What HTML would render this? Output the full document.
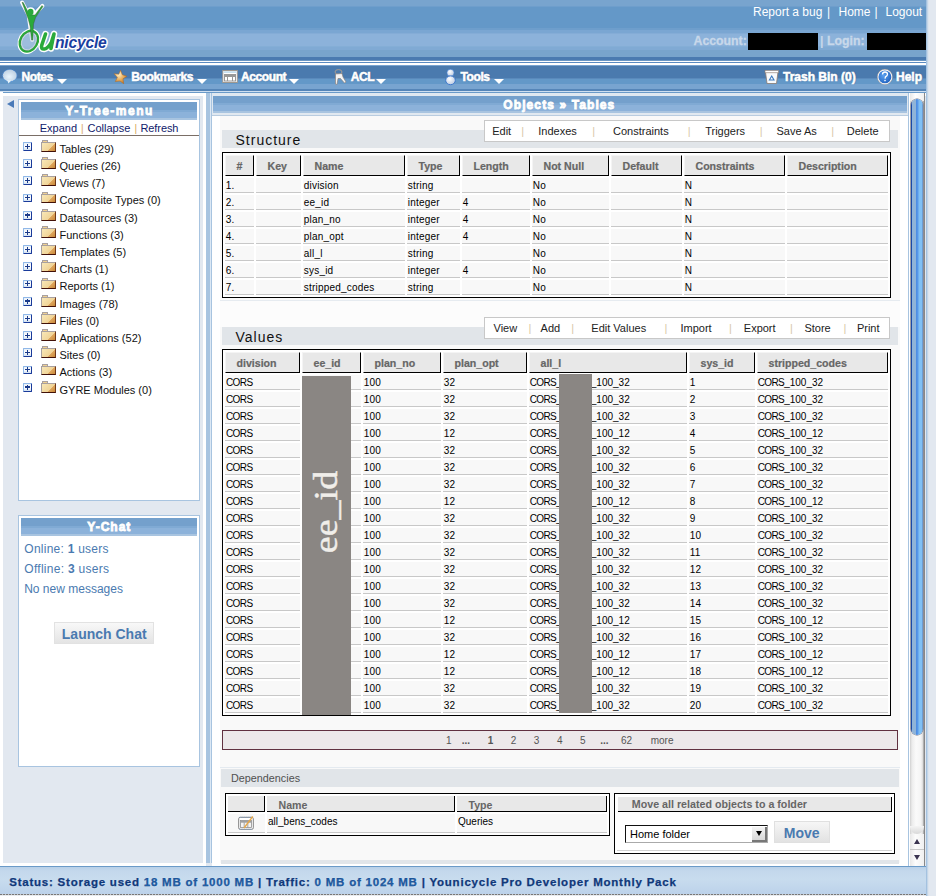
<!DOCTYPE html><html><head><meta charset="utf-8"><style>
*{margin:0;padding:0;box-sizing:border-box}
html,body{width:936px;height:896px;overflow:hidden;background:#e2e8f0;font-family:"Liberation Sans",sans-serif}
.t{position:absolute;white-space:nowrap}
.r{position:absolute}
</style></head><body><div class="r" style="left:0px;top:0px;width:926px;height:65px;background:linear-gradient(#78a4ce 0,#78a4ce 6px,#6e9ecc 6px,#6e9ecc 7.5px,#6498c8 7.5px,#6498c8 27.8px,#6e9ecc 27.8px,#6e9ecc 30px,#7aa6d2 30px,#7aa6d2 33.2px,#84acd6 33.2px,#84acd6 34px,#8cb2da 34px,#8cb2da 46px,#84aed6 46px,#84aed6 47px,#80aad4 47px,#80aad4 50px,#78a4cc 50px,#78a4cc 57.5px,#4a7ab0 57.5px,#4a7ab0 60px,#6a96c4 60px,#6a96c4 61px,#fff 61px,#fff 62px,#5a8ac0 62px,#5a8ac0 63px,#fff 63px,#fff 65px)"></div>
<div class="r" style="left:0px;top:65px;width:926px;height:31px;background:linear-gradient(#7aa4d0 0,#7aa4d0 1px,#4a7aae 1px,#4a7aae 13px,#5a8abc 13px,#5a8abc 14px,#6398c8 14px,#6398c8 19px,#78a4d0 19px,#78a4d0 24px,#5585b8 24px,#5585b8 26px,#d0e0f0 26px,#d0e0f0 27px,#6a9ac8 27px,#6a9ac8 28px,#fff 28px)"></div>
<div class="r" style="left:926px;top:0px;width:10px;height:896px;background:linear-gradient(90deg,#94b8dc 0,#b4cce4 1px,#d4e0ec 2px,#e2e8f0 3px)"></div>
<svg class="r" style="left:0;top:0" width="120" height="60" viewBox="0 0 120 60">
<g fill="none" stroke="#fff" stroke-linecap="round" stroke-linejoin="round">
<ellipse cx="28.9" cy="41.2" rx="11" ry="8.6" stroke-width="4.4" transform="rotate(-60 28.9 41.2)"/>
<path d="M22.1 2.5 L28.6 15 L30.5 28 L32.1 40" stroke-width="4"/>
<path d="M42.4 5.9 L33.4 15.6" stroke-width="4"/>
<circle cx="30.6" cy="11.9" r="3.2" stroke-width="3" fill="#fff"/>
</g>
<ellipse cx="28.9" cy="41.2" rx="9.6" ry="7.4" fill="#b0c8e0" opacity="0.5" transform="rotate(-60 28.9 41.2)"/>
<ellipse cx="28.9" cy="41.2" rx="11" ry="8.6" fill="none" stroke="#2aaa3a" stroke-width="2.2" transform="rotate(-60 28.9 41.2)"/>
<ellipse cx="28.9" cy="41.2" rx="9.9" ry="7.5" fill="none" stroke="#2a4a3a" stroke-width="0.5" opacity="0.6" transform="rotate(-60 28.9 41.2)"/>
<path d="M22 2.3 L23.3 2.6 L29.5 14.8 L35 15 L42 5.5 L43 6.5 L35.6 17.5 L33.5 24 L32.8 40 L31.6 40 L30 26 L28.2 19 Z" fill="#2aaa3a" stroke="#3a4a3a" stroke-width="0.4"/>
<ellipse cx="30.6" cy="11.9" rx="2.9" ry="3.2" fill="#2aaa3a"/>
<path d="M45.5 34 L41.8 45 Q40.5 49.5 44.5 49 Q48 48.5 51.5 42 L54 34 M54 34 L51 48.5" fill="none" stroke="#fff" stroke-width="6.5" stroke-linecap="round" stroke-linejoin="round"/>
<path d="M45.5 34 L41.8 45 Q40.5 49.5 44.5 49 Q48 48.5 51.5 42 L54 34 M54 34 L51 48.5" fill="none" stroke="#2aaa3a" stroke-width="3.6" stroke-linecap="round" stroke-linejoin="round"/>
<g font-family="Liberation Sans" font-weight="700" font-style="italic" stroke="#fff" stroke-width="3" stroke-linejoin="round" paint-order="stroke">

<text x="55" y="47.9" font-size="15.6" fill="#1a40a0" letter-spacing="-0.2">nicycle</text>
</g>
</svg>
<svg class="r" style="left:0;top:64px" width="936" height="28" viewBox="0 64 936 28">
<defs>
<radialGradient id="gb" cx="0.45" cy="0.6" r="0.7"><stop offset="0" stop-color="#e8f4fc"/><stop offset="1" stop-color="#b4c8dc"/></radialGradient>
<radialGradient id="gs" cx="0.35" cy="0.3" r="0.8"><stop offset="0" stop-color="#fff4d0"/><stop offset="0.5" stop-color="#e8b060"/><stop offset="1" stop-color="#c07020"/></radialGradient>
<radialGradient id="gh" cx="0.4" cy="0.4" r="0.7"><stop offset="0" stop-color="#5aa0f0"/><stop offset="1" stop-color="#1a5ab8"/></radialGradient>
<radialGradient id="gw" cx="0.4" cy="0.35" r="0.7"><stop offset="0" stop-color="#ffffff"/><stop offset="1" stop-color="#b8c8e0"/></radialGradient>
</defs>
<ellipse cx="9.8" cy="75.5" rx="7.1" ry="6.1" fill="url(#gb)" stroke="#4a90e8" stroke-width="0.7" stroke-dasharray="1 1"/>
<path d="M7 80 L8.5 83.5 L11 80.5 Z" fill="#e8f4fc"/>
<path d="M120.5 70.2 L122.3 74.8 L126.9 76.3 L123 78.8 L123.7 83.7 L120 81 L115.3 81.5 L117.4 77.4 L114.2 73.7 L118.8 74.3 Z" fill="url(#gs)" stroke="#b86818" stroke-width="0.5"/>
<rect x="222.8" y="70.5" width="14.5" height="12" fill="#fff" stroke="#a09890" stroke-width="1"/>
<rect x="223.5" y="71.2" width="13" height="1.8" fill="#c8e0f0"/>
<rect x="224.5" y="74.5" width="11" height="6.5" fill="none" stroke="#989898" stroke-width="1"/>
<rect x="224.5" y="74.5" width="11" height="2.5" fill="#989898"/>
<line x1="227.5" y1="77" x2="227.5" y2="81" stroke="#989898"/><line x1="232.5" y1="77" x2="232.5" y2="81" stroke="#989898"/>
<ellipse cx="338.5" cy="72" rx="3.5" ry="2.4" fill="none" stroke="#b0a090" stroke-width="0.9"/>
<path d="M335.5 74 L342 73.5 L343 77 L346 82 L344.5 83 L340.5 78.5 L338 78.5 L337 84.5 L335.5 84 L335.5 78 Z" fill="#f4f4f4" stroke="#8a7a70" stroke-width="0.6"/>
<circle cx="450.5" cy="72.8" r="3.6" fill="url(#gw)" stroke="#3a7ad0" stroke-width="0.6"/>
<ellipse cx="450.5" cy="80.3" rx="4.8" ry="4.4" fill="url(#gw)" stroke="#2a6ac8" stroke-width="0.8"/>
<path d="M765.5 72 L778 72 L776.5 83.5 L767 83.5 Z" fill="#f8fafc" stroke="#8a7a70" stroke-width="0.8"/>
<rect x="765" y="70.3" width="13.5" height="2.5" fill="#fff" stroke="#8a7a70" stroke-width="0.6"/>
<path d="M771.7 76 L774 80 L769.4 80 Z" fill="none" stroke="#3a7ac0" stroke-width="1.1"/>
<circle cx="884.9" cy="76.9" r="7" fill="url(#gh)" stroke="#fff" stroke-width="1.1"/>
<circle cx="884.9" cy="76.9" r="7.6" fill="none" stroke="#a08878" stroke-width="0.4"/>
<path d="M882.5 74.5 Q882.5 72 885 72 Q887.5 72 887.5 74.3 Q887.5 75.8 885.5 76.8 L885 78.6" fill="none" stroke="#fff" stroke-width="1.3"/>
<circle cx="885" cy="80.6" r="0.8" fill="#fff"/>
</svg>
<div class="t" style="left:753px;top:5.84px;font-size:12px;line-height:12px;font-weight:400;color:#fff;">Report a bug</div>
<div class="t" style="left:827px;top:5.84px;font-size:12px;line-height:12px;font-weight:400;color:#fff;">|</div>
<div class="t" style="left:838.5px;top:5.84px;font-size:12px;line-height:12px;font-weight:400;color:#fff;">Home</div>
<div class="t" style="left:874.5px;top:5.84px;font-size:12px;line-height:12px;font-weight:400;color:#fff;">|</div>
<div class="t" style="left:885.5px;top:5.84px;font-size:12px;line-height:12px;font-weight:400;color:#fff;">Logout</div>
<div class="t" style="left:693.5px;top:34.99px;font-size:12.3px;line-height:12.3px;font-weight:700;color:#c8d8ea;-webkit-text-stroke:0.3px #c8d8ea">Account:</div>
<div class="r" style="left:748px;top:33px;width:70px;height:17px;background:#000"></div>
<div class="t" style="left:820px;top:34.99px;font-size:12.3px;line-height:12.3px;font-weight:700;color:#c8d8ea;">|</div>
<div class="t" style="left:827px;top:34.99px;font-size:12.3px;line-height:12.3px;font-weight:700;color:#c8d8ea;-webkit-text-stroke:0.3px #c8d8ea">Login:</div>
<div class="r" style="left:867px;top:33px;width:59px;height:17px;background:#000"></div>
<div class="t" style="left:21.5px;top:71.14px;font-size:12px;line-height:12px;font-weight:700;color:#fff;letter-spacing:-0.4px;-webkit-text-stroke:0.55px #fff;text-shadow:0 0 1.5px #2a5080">Notes</div>
<div class="r" style="left:57px;top:78.5px;width:0;height:0;border-left:5px solid transparent;border-right:5px solid transparent;border-top:5.5px solid #fff"></div>
<div class="t" style="left:131.3px;top:71.14px;font-size:12px;line-height:12px;font-weight:700;color:#fff;letter-spacing:-0.4px;-webkit-text-stroke:0.55px #fff;text-shadow:0 0 1.5px #2a5080">Bookmarks</div>
<div class="r" style="left:197px;top:78.5px;width:0;height:0;border-left:5px solid transparent;border-right:5px solid transparent;border-top:5.5px solid #fff"></div>
<div class="t" style="left:241.0px;top:71.14px;font-size:12px;line-height:12px;font-weight:700;color:#fff;letter-spacing:-0.4px;-webkit-text-stroke:0.55px #fff;text-shadow:0 0 1.5px #2a5080">Account</div>
<div class="r" style="left:289px;top:78.5px;width:0;height:0;border-left:5px solid transparent;border-right:5px solid transparent;border-top:5.5px solid #fff"></div>
<div class="t" style="left:350.7px;top:71.14px;font-size:12px;line-height:12px;font-weight:700;color:#fff;letter-spacing:-0.4px;-webkit-text-stroke:0.55px #fff;text-shadow:0 0 1.5px #2a5080">ACL</div>
<div class="r" style="left:375.7px;top:78.5px;width:0;height:0;border-left:5px solid transparent;border-right:5px solid transparent;border-top:5.5px solid #fff"></div>
<div class="t" style="left:460.5px;top:71.14px;font-size:12px;line-height:12px;font-weight:700;color:#fff;letter-spacing:-0.4px;-webkit-text-stroke:0.55px #fff;text-shadow:0 0 1.5px #2a5080">Tools</div>
<div class="r" style="left:494px;top:78.5px;width:0;height:0;border-left:5px solid transparent;border-right:5px solid transparent;border-top:5.5px solid #fff"></div>
<div class="t" style="left:783px;top:71.14px;font-size:12px;line-height:12px;font-weight:700;color:#fff;-webkit-text-stroke:0.55px #fff;text-shadow:0 0 1.5px #2a5080">Trash Bin (0)</div>
<div class="t" style="left:896px;top:71.14px;font-size:12px;line-height:12px;font-weight:700;color:#fff;-webkit-text-stroke:0.55px #fff;text-shadow:0 0 1.5px #2a5080">Help</div>
<div class="r" style="left:0px;top:92px;width:3px;height:774px;background:#fff"></div>
<div class="r" style="left:3px;top:96px;width:200px;height:767px;background:#e2e8f0"></div>
<div class="r" style="left:3px;top:863px;width:200px;height:3px;background:#fff"></div>
<div class="r" style="left:7px;top:100px;width:0;height:0;border-top:4px solid transparent;border-bottom:4px solid transparent;border-right:7px solid #4a7ab8"></div>
<div class="r" style="left:18px;top:99px;width:182px;height:402px;background:#fff;border:1px solid #a8c4e0"></div>
<div class="r" style="left:21px;top:102px;width:176px;height:18px;background:linear-gradient(#74a0cc 0,#74a0cc 8px,#80aad4 8px,#80aad4 10px,#8cb2da 10px,#8cb2da 16px,#a8c4e0 16px)"></div>
<div class="t" style="left:65.3px;top:104.84px;font-size:12px;line-height:12px;font-weight:700;color:#fff;letter-spacing:1.5px;-webkit-text-stroke:0.85px #fff;text-shadow:0 0 1px #5a80a8">Y-Tree-menu</div>
<div class="t" style="left:39.7px;top:122.69px;font-size:11px;line-height:11px;font-weight:400;color:#10206a;">Expand</div>
<div class="t" style="left:81px;top:123.53px;font-size:10px;line-height:10px;font-weight:400;color:#d8a858;">|</div>
<div class="t" style="left:87.5px;top:122.69px;font-size:11px;line-height:11px;font-weight:400;color:#10206a;">Collapse</div>
<div class="t" style="left:134.5px;top:123.53px;font-size:10px;line-height:10px;font-weight:400;color:#d8a858;">|</div>
<div class="t" style="left:140.5px;top:122.69px;font-size:11px;line-height:11px;font-weight:400;color:#10206a;letter-spacing:-0.1px">Refresh</div>
<div class="r" style="left:19px;top:135px;width:180px;height:1px;background:#7a6e66"></div>
<div class="r" style="left:23.2px;top:142.00px;width:8.8px;height:8.8px;border-top:1px solid #90b8e8;border-left:1px solid #90b8e8;border-right:1.4px solid #1a3a9a;border-bottom:1.4px solid #1a3a9a;border-radius:1px;background:linear-gradient(#e8f0f8,#fff 50%,#d0e0f0)"></div>
<div class="r" style="left:25.2px;top:145.60px;width:5px;height:1.3px;background:#1a3a8a"></div>
<div class="r" style="left:27.05px;top:143.70px;width:1.3px;height:5px;background:#1a3a8a"></div>
<div class="r" style="left:41.5px;top:140.00px;width:6.5px;height:2.4px;background:#f0d090;border:1px solid #a8a0a0;border-bottom:none"></div>
<div class="r" style="left:41.2px;top:142.00px;width:14.5px;height:9.8px;background:linear-gradient(135deg,#f8e8b8 0,#f0d498 62%,#e0a860 64%,#c88838 100%);border-left:1px solid #a8a0a0;border-top:1px solid #a8a0a0;border-right:1px solid #703818;border-bottom:1.5px solid #401008"></div>
<div class="t" style="left:59.5px;top:143.89px;font-size:11px;line-height:11px;font-weight:400;color:#111;">Tables (29)</div>
<div class="r" style="left:23.2px;top:159.20px;width:8.8px;height:8.8px;border-top:1px solid #90b8e8;border-left:1px solid #90b8e8;border-right:1.4px solid #1a3a9a;border-bottom:1.4px solid #1a3a9a;border-radius:1px;background:linear-gradient(#e8f0f8,#fff 50%,#d0e0f0)"></div>
<div class="r" style="left:25.2px;top:162.80px;width:5px;height:1.3px;background:#1a3a8a"></div>
<div class="r" style="left:27.05px;top:160.90px;width:1.3px;height:5px;background:#1a3a8a"></div>
<div class="r" style="left:41.5px;top:157.20px;width:6.5px;height:2.4px;background:#f0d090;border:1px solid #a8a0a0;border-bottom:none"></div>
<div class="r" style="left:41.2px;top:159.20px;width:14.5px;height:9.8px;background:linear-gradient(135deg,#f8e8b8 0,#f0d498 62%,#e0a860 64%,#c88838 100%);border-left:1px solid #a8a0a0;border-top:1px solid #a8a0a0;border-right:1px solid #703818;border-bottom:1.5px solid #401008"></div>
<div class="t" style="left:59.5px;top:161.09px;font-size:11px;line-height:11px;font-weight:400;color:#111;">Queries (26)</div>
<div class="r" style="left:23.2px;top:176.40px;width:8.8px;height:8.8px;border-top:1px solid #90b8e8;border-left:1px solid #90b8e8;border-right:1.4px solid #1a3a9a;border-bottom:1.4px solid #1a3a9a;border-radius:1px;background:linear-gradient(#e8f0f8,#fff 50%,#d0e0f0)"></div>
<div class="r" style="left:25.2px;top:180.00px;width:5px;height:1.3px;background:#1a3a8a"></div>
<div class="r" style="left:27.05px;top:178.10px;width:1.3px;height:5px;background:#1a3a8a"></div>
<div class="r" style="left:41.5px;top:174.40px;width:6.5px;height:2.4px;background:#f0d090;border:1px solid #a8a0a0;border-bottom:none"></div>
<div class="r" style="left:41.2px;top:176.40px;width:14.5px;height:9.8px;background:linear-gradient(135deg,#f8e8b8 0,#f0d498 62%,#e0a860 64%,#c88838 100%);border-left:1px solid #a8a0a0;border-top:1px solid #a8a0a0;border-right:1px solid #703818;border-bottom:1.5px solid #401008"></div>
<div class="t" style="left:59.5px;top:178.29px;font-size:11px;line-height:11px;font-weight:400;color:#111;">Views (7)</div>
<div class="r" style="left:23.2px;top:193.60px;width:8.8px;height:8.8px;border-top:1px solid #90b8e8;border-left:1px solid #90b8e8;border-right:1.4px solid #1a3a9a;border-bottom:1.4px solid #1a3a9a;border-radius:1px;background:linear-gradient(#e8f0f8,#fff 50%,#d0e0f0)"></div>
<div class="r" style="left:25.2px;top:197.20px;width:5px;height:1.3px;background:#1a3a8a"></div>
<div class="r" style="left:27.05px;top:195.30px;width:1.3px;height:5px;background:#1a3a8a"></div>
<div class="r" style="left:41.5px;top:191.60px;width:6.5px;height:2.4px;background:#f0d090;border:1px solid #a8a0a0;border-bottom:none"></div>
<div class="r" style="left:41.2px;top:193.60px;width:14.5px;height:9.8px;background:linear-gradient(135deg,#f8e8b8 0,#f0d498 62%,#e0a860 64%,#c88838 100%);border-left:1px solid #a8a0a0;border-top:1px solid #a8a0a0;border-right:1px solid #703818;border-bottom:1.5px solid #401008"></div>
<div class="t" style="left:59.5px;top:195.49px;font-size:11px;line-height:11px;font-weight:400;color:#111;">Composite Types (0)</div>
<div class="r" style="left:23.2px;top:210.80px;width:8.8px;height:8.8px;border-top:1px solid #90b8e8;border-left:1px solid #90b8e8;border-right:1.4px solid #1a3a9a;border-bottom:1.4px solid #1a3a9a;border-radius:1px;background:linear-gradient(#e8f0f8,#fff 50%,#d0e0f0)"></div>
<div class="r" style="left:25.2px;top:214.40px;width:5px;height:1.3px;background:#1a3a8a"></div>
<div class="r" style="left:27.05px;top:212.50px;width:1.3px;height:5px;background:#1a3a8a"></div>
<div class="r" style="left:41.5px;top:208.80px;width:6.5px;height:2.4px;background:#f0d090;border:1px solid #a8a0a0;border-bottom:none"></div>
<div class="r" style="left:41.2px;top:210.80px;width:14.5px;height:9.8px;background:linear-gradient(135deg,#f8e8b8 0,#f0d498 62%,#e0a860 64%,#c88838 100%);border-left:1px solid #a8a0a0;border-top:1px solid #a8a0a0;border-right:1px solid #703818;border-bottom:1.5px solid #401008"></div>
<div class="t" style="left:59.5px;top:212.69px;font-size:11px;line-height:11px;font-weight:400;color:#111;">Datasources (3)</div>
<div class="r" style="left:23.2px;top:228.00px;width:8.8px;height:8.8px;border-top:1px solid #90b8e8;border-left:1px solid #90b8e8;border-right:1.4px solid #1a3a9a;border-bottom:1.4px solid #1a3a9a;border-radius:1px;background:linear-gradient(#e8f0f8,#fff 50%,#d0e0f0)"></div>
<div class="r" style="left:25.2px;top:231.60px;width:5px;height:1.3px;background:#1a3a8a"></div>
<div class="r" style="left:27.05px;top:229.70px;width:1.3px;height:5px;background:#1a3a8a"></div>
<div class="r" style="left:41.5px;top:226.00px;width:6.5px;height:2.4px;background:#f0d090;border:1px solid #a8a0a0;border-bottom:none"></div>
<div class="r" style="left:41.2px;top:228.00px;width:14.5px;height:9.8px;background:linear-gradient(135deg,#f8e8b8 0,#f0d498 62%,#e0a860 64%,#c88838 100%);border-left:1px solid #a8a0a0;border-top:1px solid #a8a0a0;border-right:1px solid #703818;border-bottom:1.5px solid #401008"></div>
<div class="t" style="left:59.5px;top:229.89px;font-size:11px;line-height:11px;font-weight:400;color:#111;">Functions (3)</div>
<div class="r" style="left:23.2px;top:245.20px;width:8.8px;height:8.8px;border-top:1px solid #90b8e8;border-left:1px solid #90b8e8;border-right:1.4px solid #1a3a9a;border-bottom:1.4px solid #1a3a9a;border-radius:1px;background:linear-gradient(#e8f0f8,#fff 50%,#d0e0f0)"></div>
<div class="r" style="left:25.2px;top:248.80px;width:5px;height:1.3px;background:#1a3a8a"></div>
<div class="r" style="left:27.05px;top:246.90px;width:1.3px;height:5px;background:#1a3a8a"></div>
<div class="r" style="left:41.5px;top:243.20px;width:6.5px;height:2.4px;background:#f0d090;border:1px solid #a8a0a0;border-bottom:none"></div>
<div class="r" style="left:41.2px;top:245.20px;width:14.5px;height:9.8px;background:linear-gradient(135deg,#f8e8b8 0,#f0d498 62%,#e0a860 64%,#c88838 100%);border-left:1px solid #a8a0a0;border-top:1px solid #a8a0a0;border-right:1px solid #703818;border-bottom:1.5px solid #401008"></div>
<div class="t" style="left:59.5px;top:247.09px;font-size:11px;line-height:11px;font-weight:400;color:#111;">Templates (5)</div>
<div class="r" style="left:23.2px;top:262.40px;width:8.8px;height:8.8px;border-top:1px solid #90b8e8;border-left:1px solid #90b8e8;border-right:1.4px solid #1a3a9a;border-bottom:1.4px solid #1a3a9a;border-radius:1px;background:linear-gradient(#e8f0f8,#fff 50%,#d0e0f0)"></div>
<div class="r" style="left:25.2px;top:266.00px;width:5px;height:1.3px;background:#1a3a8a"></div>
<div class="r" style="left:27.05px;top:264.10px;width:1.3px;height:5px;background:#1a3a8a"></div>
<div class="r" style="left:41.5px;top:260.40px;width:6.5px;height:2.4px;background:#f0d090;border:1px solid #a8a0a0;border-bottom:none"></div>
<div class="r" style="left:41.2px;top:262.40px;width:14.5px;height:9.8px;background:linear-gradient(135deg,#f8e8b8 0,#f0d498 62%,#e0a860 64%,#c88838 100%);border-left:1px solid #a8a0a0;border-top:1px solid #a8a0a0;border-right:1px solid #703818;border-bottom:1.5px solid #401008"></div>
<div class="t" style="left:59.5px;top:264.29px;font-size:11px;line-height:11px;font-weight:400;color:#111;">Charts (1)</div>
<div class="r" style="left:23.2px;top:279.60px;width:8.8px;height:8.8px;border-top:1px solid #90b8e8;border-left:1px solid #90b8e8;border-right:1.4px solid #1a3a9a;border-bottom:1.4px solid #1a3a9a;border-radius:1px;background:linear-gradient(#e8f0f8,#fff 50%,#d0e0f0)"></div>
<div class="r" style="left:25.2px;top:283.20px;width:5px;height:1.3px;background:#1a3a8a"></div>
<div class="r" style="left:27.05px;top:281.30px;width:1.3px;height:5px;background:#1a3a8a"></div>
<div class="r" style="left:41.5px;top:277.60px;width:6.5px;height:2.4px;background:#f0d090;border:1px solid #a8a0a0;border-bottom:none"></div>
<div class="r" style="left:41.2px;top:279.60px;width:14.5px;height:9.8px;background:linear-gradient(135deg,#f8e8b8 0,#f0d498 62%,#e0a860 64%,#c88838 100%);border-left:1px solid #a8a0a0;border-top:1px solid #a8a0a0;border-right:1px solid #703818;border-bottom:1.5px solid #401008"></div>
<div class="t" style="left:59.5px;top:281.49px;font-size:11px;line-height:11px;font-weight:400;color:#111;">Reports (1)</div>
<div class="r" style="left:23.2px;top:296.80px;width:8.8px;height:8.8px;border-top:1px solid #90b8e8;border-left:1px solid #90b8e8;border-right:1.4px solid #1a3a9a;border-bottom:1.4px solid #1a3a9a;border-radius:1px;background:linear-gradient(#e8f0f8,#fff 50%,#d0e0f0)"></div>
<div class="r" style="left:25.2px;top:300.40px;width:5px;height:1.3px;background:#1a3a8a"></div>
<div class="r" style="left:27.05px;top:298.50px;width:1.3px;height:5px;background:#1a3a8a"></div>
<div class="r" style="left:41.5px;top:294.80px;width:6.5px;height:2.4px;background:#f0d090;border:1px solid #a8a0a0;border-bottom:none"></div>
<div class="r" style="left:41.2px;top:296.80px;width:14.5px;height:9.8px;background:linear-gradient(135deg,#f8e8b8 0,#f0d498 62%,#e0a860 64%,#c88838 100%);border-left:1px solid #a8a0a0;border-top:1px solid #a8a0a0;border-right:1px solid #703818;border-bottom:1.5px solid #401008"></div>
<div class="t" style="left:59.5px;top:298.69px;font-size:11px;line-height:11px;font-weight:400;color:#111;">Images (78)</div>
<div class="r" style="left:23.2px;top:314.00px;width:8.8px;height:8.8px;border-top:1px solid #90b8e8;border-left:1px solid #90b8e8;border-right:1.4px solid #1a3a9a;border-bottom:1.4px solid #1a3a9a;border-radius:1px;background:linear-gradient(#e8f0f8,#fff 50%,#d0e0f0)"></div>
<div class="r" style="left:25.2px;top:317.60px;width:5px;height:1.3px;background:#1a3a8a"></div>
<div class="r" style="left:27.05px;top:315.70px;width:1.3px;height:5px;background:#1a3a8a"></div>
<div class="r" style="left:41.5px;top:312.00px;width:6.5px;height:2.4px;background:#f0d090;border:1px solid #a8a0a0;border-bottom:none"></div>
<div class="r" style="left:41.2px;top:314.00px;width:14.5px;height:9.8px;background:linear-gradient(135deg,#f8e8b8 0,#f0d498 62%,#e0a860 64%,#c88838 100%);border-left:1px solid #a8a0a0;border-top:1px solid #a8a0a0;border-right:1px solid #703818;border-bottom:1.5px solid #401008"></div>
<div class="t" style="left:59.5px;top:315.89px;font-size:11px;line-height:11px;font-weight:400;color:#111;">Files (0)</div>
<div class="r" style="left:23.2px;top:331.20px;width:8.8px;height:8.8px;border-top:1px solid #90b8e8;border-left:1px solid #90b8e8;border-right:1.4px solid #1a3a9a;border-bottom:1.4px solid #1a3a9a;border-radius:1px;background:linear-gradient(#e8f0f8,#fff 50%,#d0e0f0)"></div>
<div class="r" style="left:25.2px;top:334.80px;width:5px;height:1.3px;background:#1a3a8a"></div>
<div class="r" style="left:27.05px;top:332.90px;width:1.3px;height:5px;background:#1a3a8a"></div>
<div class="r" style="left:41.5px;top:329.20px;width:6.5px;height:2.4px;background:#f0d090;border:1px solid #a8a0a0;border-bottom:none"></div>
<div class="r" style="left:41.2px;top:331.20px;width:14.5px;height:9.8px;background:linear-gradient(135deg,#f8e8b8 0,#f0d498 62%,#e0a860 64%,#c88838 100%);border-left:1px solid #a8a0a0;border-top:1px solid #a8a0a0;border-right:1px solid #703818;border-bottom:1.5px solid #401008"></div>
<div class="t" style="left:59.5px;top:333.09px;font-size:11px;line-height:11px;font-weight:400;color:#111;">Applications (52)</div>
<div class="r" style="left:23.2px;top:348.40px;width:8.8px;height:8.8px;border-top:1px solid #90b8e8;border-left:1px solid #90b8e8;border-right:1.4px solid #1a3a9a;border-bottom:1.4px solid #1a3a9a;border-radius:1px;background:linear-gradient(#e8f0f8,#fff 50%,#d0e0f0)"></div>
<div class="r" style="left:25.2px;top:352.00px;width:5px;height:1.3px;background:#1a3a8a"></div>
<div class="r" style="left:27.05px;top:350.10px;width:1.3px;height:5px;background:#1a3a8a"></div>
<div class="r" style="left:41.5px;top:346.40px;width:6.5px;height:2.4px;background:#f0d090;border:1px solid #a8a0a0;border-bottom:none"></div>
<div class="r" style="left:41.2px;top:348.40px;width:14.5px;height:9.8px;background:linear-gradient(135deg,#f8e8b8 0,#f0d498 62%,#e0a860 64%,#c88838 100%);border-left:1px solid #a8a0a0;border-top:1px solid #a8a0a0;border-right:1px solid #703818;border-bottom:1.5px solid #401008"></div>
<div class="t" style="left:59.5px;top:350.29px;font-size:11px;line-height:11px;font-weight:400;color:#111;">Sites (0)</div>
<div class="r" style="left:23.2px;top:365.60px;width:8.8px;height:8.8px;border-top:1px solid #90b8e8;border-left:1px solid #90b8e8;border-right:1.4px solid #1a3a9a;border-bottom:1.4px solid #1a3a9a;border-radius:1px;background:linear-gradient(#e8f0f8,#fff 50%,#d0e0f0)"></div>
<div class="r" style="left:25.2px;top:369.20px;width:5px;height:1.3px;background:#1a3a8a"></div>
<div class="r" style="left:27.05px;top:367.30px;width:1.3px;height:5px;background:#1a3a8a"></div>
<div class="r" style="left:41.5px;top:363.60px;width:6.5px;height:2.4px;background:#f0d090;border:1px solid #a8a0a0;border-bottom:none"></div>
<div class="r" style="left:41.2px;top:365.60px;width:14.5px;height:9.8px;background:linear-gradient(135deg,#f8e8b8 0,#f0d498 62%,#e0a860 64%,#c88838 100%);border-left:1px solid #a8a0a0;border-top:1px solid #a8a0a0;border-right:1px solid #703818;border-bottom:1.5px solid #401008"></div>
<div class="t" style="left:59.5px;top:367.49px;font-size:11px;line-height:11px;font-weight:400;color:#111;">Actions (3)</div>
<div class="r" style="left:23.2px;top:382.80px;width:8.8px;height:8.8px;border-top:1px solid #90b8e8;border-left:1px solid #90b8e8;border-right:1.4px solid #1a3a9a;border-bottom:1.4px solid #1a3a9a;border-radius:1px;background:linear-gradient(#e8f0f8,#fff 50%,#d0e0f0)"></div>
<div class="r" style="left:25.2px;top:386.40px;width:5px;height:1.3px;background:#1a3a8a"></div>
<div class="r" style="left:27.05px;top:384.50px;width:1.3px;height:5px;background:#1a3a8a"></div>
<div class="r" style="left:41.5px;top:380.80px;width:6.5px;height:2.4px;background:#f0d090;border:1px solid #a8a0a0;border-bottom:none"></div>
<div class="r" style="left:41.2px;top:382.80px;width:14.5px;height:9.8px;background:linear-gradient(135deg,#f8e8b8 0,#f0d498 62%,#e0a860 64%,#c88838 100%);border-left:1px solid #a8a0a0;border-top:1px solid #a8a0a0;border-right:1px solid #703818;border-bottom:1.5px solid #401008"></div>
<div class="t" style="left:59.5px;top:384.69px;font-size:11px;line-height:11px;font-weight:400;color:#111;">GYRE Modules (0)</div>
<div class="r" style="left:18px;top:515px;width:182px;height:252px;background:#fff;border:1px solid #a8c4e0"></div>
<div class="r" style="left:21px;top:518px;width:176px;height:18px;background:linear-gradient(#74a0cc 0,#74a0cc 8px,#80aad4 8px,#80aad4 10px,#8cb2da 10px,#8cb2da 16px,#a8c4e0 16px)"></div>
<div class="t" style="left:87.3px;top:521.04px;font-size:12px;line-height:12px;font-weight:700;color:#fff;letter-spacing:1px;-webkit-text-stroke:0.85px #fff;text-shadow:0 0 1px #5a80a8">Y-Chat</div>
<div class="t" style="left:24.3px;top:542.84px;font-size:12px;line-height:12px;font-weight:400;color:#4a7ab0;letter-spacing:0.25px">Online: <b>1</b> users</div>
<div class="t" style="left:24.3px;top:562.84px;font-size:12px;line-height:12px;font-weight:400;color:#4a7ab0;letter-spacing:0.28px">Offline: <b>3</b> users</div>
<div class="t" style="left:24.2px;top:583.04px;font-size:12px;line-height:12px;font-weight:400;color:#4a7ab0;">No new messages</div>
<div class="r" style="left:54px;top:622px;width:100px;height:22px;background:linear-gradient(#f8f8f8,#e4e4e4);border:1px solid #e2e2e2"></div>
<div class="t" style="left:61.8px;top:627.15px;font-size:14px;line-height:14px;font-weight:700;color:#4a7ab0;">Launch Chat</div>
<div class="r" style="left:203px;top:93px;width:3px;height:773px;background:#fff"></div>
<div class="r" style="left:206px;top:93px;width:4px;height:770px;background:#a8c4e0"></div>
<div class="r" style="left:210px;top:93px;width:1px;height:770px;background:#dce8f4"></div>
<div class="r" style="left:211px;top:93px;width:1px;height:770px;background:#a8c4e0"></div>
<div class="r" style="left:212px;top:93px;width:698px;height:773px;background:#fff"></div>
<div class="r" style="left:212px;top:93px;width:697px;height:23px;background:#e0e8f0"></div>
<div class="r" style="left:213px;top:96px;width:694px;height:17px;background:linear-gradient(#74a0cc 0,#74a0cc 7px,#80aad4 7px,#80aad4 9px,#8cb2da 9px,#8cb2da 15px,#a8c4e0 15px)"></div>
<div class="t" style="left:503.3px;top:99.04px;font-size:12px;line-height:12px;font-weight:700;color:#fff;letter-spacing:1.1px;-webkit-text-stroke:0.85px #fff;text-shadow:0 0 1px #5a80a8">Objects &raquo; Tables</div>
<div class="r" style="left:212px;top:115px;width:697px;height:1px;background:#b8cce0"></div>
<div class="r" style="left:908px;top:93px;width:1px;height:773px;background:#a8c4e0"></div>
<div class="r" style="left:220px;top:116px;width:680px;height:747px;background:#f9f9f9"></div>
<div class="r" style="left:222px;top:130px;width:676px;height:18px;background:#e1e5e9"></div>
<div class="t" style="left:235.5px;top:133.15px;font-size:14px;line-height:14px;font-weight:400;color:#111;letter-spacing:1px">Structure</div>
<div class="r" style="left:484px;top:120px;width:406px;height:22px;background:#fff;border:1px solid #c8c8c8"></div>
<div class="t" style="left:492.2px;top:125.69px;font-size:11px;line-height:11px;font-weight:400;color:#222;">Edit</div>
<div class="t" style="left:521.2px;top:125.69px;font-size:11px;line-height:11px;font-weight:400;color:#d8c8a8;">|</div>
<div class="t" style="left:538.3px;top:125.69px;font-size:11px;line-height:11px;font-weight:400;color:#222;">Indexes</div>
<div class="t" style="left:592.3px;top:125.69px;font-size:11px;line-height:11px;font-weight:400;color:#d8c8a8;">|</div>
<div class="t" style="left:613px;top:125.69px;font-size:11px;line-height:11px;font-weight:400;color:#222;">Constraints</div>
<div class="t" style="left:687.7px;top:125.69px;font-size:11px;line-height:11px;font-weight:400;color:#d8c8a8;">|</div>
<div class="t" style="left:705.2px;top:125.69px;font-size:11px;line-height:11px;font-weight:400;color:#222;">Triggers</div>
<div class="t" style="left:759.8px;top:125.69px;font-size:11px;line-height:11px;font-weight:400;color:#d8c8a8;">|</div>
<div class="t" style="left:776.5px;top:125.69px;font-size:11px;line-height:11px;font-weight:400;color:#222;">Save As</div>
<div class="t" style="left:831.2px;top:125.69px;font-size:11px;line-height:11px;font-weight:400;color:#d8c8a8;">|</div>
<div class="t" style="left:846.8px;top:125.69px;font-size:11px;line-height:11px;font-weight:400;color:#222;">Delete</div>
<div class="r" style="left:222px;top:152px;width:669px;height:146px;background:#fff;border:1px solid #000"></div>
<div class="r" style="left:225px;top:155px;width:29px;height:21px;background:#e8e8e8;border-right:1px solid #000;border-bottom:1px solid #000;border-left:1px solid #f4f4f4;border-top:1px solid #f4f4f4"></div>
<div class="t" style="left:236.5px;top:161.33px;font-size:10.6px;line-height:10.6px;font-weight:700;color:#666;-webkit-text-stroke:0.2px #666">#</div>
<div class="r" style="left:256px;top:155px;width:45px;height:21px;background:#e8e8e8;border-right:1px solid #000;border-bottom:1px solid #000;border-left:1px solid #f4f4f4;border-top:1px solid #f4f4f4"></div>
<div class="t" style="left:267.5px;top:161.33px;font-size:10.6px;line-height:10.6px;font-weight:700;color:#666;-webkit-text-stroke:0.2px #666">Key</div>
<div class="r" style="left:303px;top:155px;width:102px;height:21px;background:#e8e8e8;border-right:1px solid #000;border-bottom:1px solid #000;border-left:1px solid #f4f4f4;border-top:1px solid #f4f4f4"></div>
<div class="t" style="left:314.5px;top:161.33px;font-size:10.6px;line-height:10.6px;font-weight:700;color:#666;-webkit-text-stroke:0.2px #666">Name</div>
<div class="r" style="left:407px;top:155px;width:53px;height:21px;background:#e8e8e8;border-right:1px solid #000;border-bottom:1px solid #000;border-left:1px solid #f4f4f4;border-top:1px solid #f4f4f4"></div>
<div class="t" style="left:418.5px;top:161.33px;font-size:10.6px;line-height:10.6px;font-weight:700;color:#666;-webkit-text-stroke:0.2px #666">Type</div>
<div class="r" style="left:462px;top:155px;width:68px;height:21px;background:#e8e8e8;border-right:1px solid #000;border-bottom:1px solid #000;border-left:1px solid #f4f4f4;border-top:1px solid #f4f4f4"></div>
<div class="t" style="left:473.5px;top:161.33px;font-size:10.6px;line-height:10.6px;font-weight:700;color:#666;-webkit-text-stroke:0.2px #666">Length</div>
<div class="r" style="left:532px;top:155px;width:77px;height:21px;background:#e8e8e8;border-right:1px solid #000;border-bottom:1px solid #000;border-left:1px solid #f4f4f4;border-top:1px solid #f4f4f4"></div>
<div class="t" style="left:543.5px;top:161.33px;font-size:10.6px;line-height:10.6px;font-weight:700;color:#666;-webkit-text-stroke:0.2px #666">Not Null</div>
<div class="r" style="left:611px;top:155px;width:71px;height:21px;background:#e8e8e8;border-right:1px solid #000;border-bottom:1px solid #000;border-left:1px solid #f4f4f4;border-top:1px solid #f4f4f4"></div>
<div class="t" style="left:622.5px;top:161.33px;font-size:10.6px;line-height:10.6px;font-weight:700;color:#666;-webkit-text-stroke:0.2px #666">Default</div>
<div class="r" style="left:684px;top:155px;width:101px;height:21px;background:#e8e8e8;border-right:1px solid #000;border-bottom:1px solid #000;border-left:1px solid #f4f4f4;border-top:1px solid #f4f4f4"></div>
<div class="t" style="left:695.5px;top:161.33px;font-size:10.6px;line-height:10.6px;font-weight:700;color:#666;-webkit-text-stroke:0.2px #666">Constraints</div>
<div class="r" style="left:787px;top:155px;width:101px;height:21px;background:#e8e8e8;border-right:1px solid #000;border-bottom:1px solid #000;border-left:1px solid #f4f4f4;border-top:1px solid #f4f4f4"></div>
<div class="t" style="left:798.5px;top:161.33px;font-size:10.6px;line-height:10.6px;font-weight:700;color:#666;-webkit-text-stroke:0.2px #666">Description</div>
<div class="r" style="left:225px;top:178px;width:29px;height:15px;background:#f8f8f8;border-bottom:1px solid #c8c8c8"></div>
<div class="t" style="left:225.8px;top:180.94px;font-size:10px;line-height:10px;font-weight:400;color:#000;letter-spacing:0.2px">1.</div>
<div class="r" style="left:256px;top:178px;width:45px;height:15px;background:#f8f8f8;border-bottom:1px solid #c8c8c8"></div>
<div class="r" style="left:303px;top:178px;width:102px;height:15px;background:#f8f8f8;border-bottom:1px solid #c8c8c8"></div>
<div class="t" style="left:303.8px;top:180.94px;font-size:10px;line-height:10px;font-weight:400;color:#000;letter-spacing:0.2px">division</div>
<div class="r" style="left:407px;top:178px;width:53px;height:15px;background:#f8f8f8;border-bottom:1px solid #c8c8c8"></div>
<div class="t" style="left:407.8px;top:180.94px;font-size:10px;line-height:10px;font-weight:400;color:#000;letter-spacing:0.2px">string</div>
<div class="r" style="left:462px;top:178px;width:68px;height:15px;background:#f8f8f8;border-bottom:1px solid #c8c8c8"></div>
<div class="r" style="left:532px;top:178px;width:77px;height:15px;background:#f8f8f8;border-bottom:1px solid #c8c8c8"></div>
<div class="t" style="left:532.8px;top:180.94px;font-size:10px;line-height:10px;font-weight:400;color:#000;letter-spacing:0.2px">No</div>
<div class="r" style="left:611px;top:178px;width:71px;height:15px;background:#f8f8f8;border-bottom:1px solid #c8c8c8"></div>
<div class="r" style="left:684px;top:178px;width:101px;height:15px;background:#f8f8f8;border-bottom:1px solid #c8c8c8"></div>
<div class="t" style="left:684.8px;top:180.94px;font-size:10px;line-height:10px;font-weight:400;color:#000;letter-spacing:0.2px">N</div>
<div class="r" style="left:787px;top:178px;width:101px;height:15px;background:#f8f8f8;border-bottom:1px solid #c8c8c8"></div>
<div class="r" style="left:225px;top:195px;width:29px;height:15px;background:#f8f8f8;border-bottom:1px solid #c8c8c8"></div>
<div class="t" style="left:225.8px;top:197.94px;font-size:10px;line-height:10px;font-weight:400;color:#000;letter-spacing:0.2px">2.</div>
<div class="r" style="left:256px;top:195px;width:45px;height:15px;background:#f8f8f8;border-bottom:1px solid #c8c8c8"></div>
<div class="r" style="left:303px;top:195px;width:102px;height:15px;background:#f8f8f8;border-bottom:1px solid #c8c8c8"></div>
<div class="t" style="left:303.8px;top:197.94px;font-size:10px;line-height:10px;font-weight:400;color:#000;letter-spacing:0.2px">ee_id</div>
<div class="r" style="left:407px;top:195px;width:53px;height:15px;background:#f8f8f8;border-bottom:1px solid #c8c8c8"></div>
<div class="t" style="left:407.8px;top:197.94px;font-size:10px;line-height:10px;font-weight:400;color:#000;letter-spacing:0.2px">integer</div>
<div class="r" style="left:462px;top:195px;width:68px;height:15px;background:#f8f8f8;border-bottom:1px solid #c8c8c8"></div>
<div class="t" style="left:462.8px;top:197.94px;font-size:10px;line-height:10px;font-weight:400;color:#000;letter-spacing:0.2px">4</div>
<div class="r" style="left:532px;top:195px;width:77px;height:15px;background:#f8f8f8;border-bottom:1px solid #c8c8c8"></div>
<div class="t" style="left:532.8px;top:197.94px;font-size:10px;line-height:10px;font-weight:400;color:#000;letter-spacing:0.2px">No</div>
<div class="r" style="left:611px;top:195px;width:71px;height:15px;background:#f8f8f8;border-bottom:1px solid #c8c8c8"></div>
<div class="r" style="left:684px;top:195px;width:101px;height:15px;background:#f8f8f8;border-bottom:1px solid #c8c8c8"></div>
<div class="t" style="left:684.8px;top:197.94px;font-size:10px;line-height:10px;font-weight:400;color:#000;letter-spacing:0.2px">N</div>
<div class="r" style="left:787px;top:195px;width:101px;height:15px;background:#f8f8f8;border-bottom:1px solid #c8c8c8"></div>
<div class="r" style="left:225px;top:212px;width:29px;height:15px;background:#f8f8f8;border-bottom:1px solid #c8c8c8"></div>
<div class="t" style="left:225.8px;top:214.94px;font-size:10px;line-height:10px;font-weight:400;color:#000;letter-spacing:0.2px">3.</div>
<div class="r" style="left:256px;top:212px;width:45px;height:15px;background:#f8f8f8;border-bottom:1px solid #c8c8c8"></div>
<div class="r" style="left:303px;top:212px;width:102px;height:15px;background:#f8f8f8;border-bottom:1px solid #c8c8c8"></div>
<div class="t" style="left:303.8px;top:214.94px;font-size:10px;line-height:10px;font-weight:400;color:#000;letter-spacing:0.2px">plan_no</div>
<div class="r" style="left:407px;top:212px;width:53px;height:15px;background:#f8f8f8;border-bottom:1px solid #c8c8c8"></div>
<div class="t" style="left:407.8px;top:214.94px;font-size:10px;line-height:10px;font-weight:400;color:#000;letter-spacing:0.2px">integer</div>
<div class="r" style="left:462px;top:212px;width:68px;height:15px;background:#f8f8f8;border-bottom:1px solid #c8c8c8"></div>
<div class="t" style="left:462.8px;top:214.94px;font-size:10px;line-height:10px;font-weight:400;color:#000;letter-spacing:0.2px">4</div>
<div class="r" style="left:532px;top:212px;width:77px;height:15px;background:#f8f8f8;border-bottom:1px solid #c8c8c8"></div>
<div class="t" style="left:532.8px;top:214.94px;font-size:10px;line-height:10px;font-weight:400;color:#000;letter-spacing:0.2px">No</div>
<div class="r" style="left:611px;top:212px;width:71px;height:15px;background:#f8f8f8;border-bottom:1px solid #c8c8c8"></div>
<div class="r" style="left:684px;top:212px;width:101px;height:15px;background:#f8f8f8;border-bottom:1px solid #c8c8c8"></div>
<div class="t" style="left:684.8px;top:214.94px;font-size:10px;line-height:10px;font-weight:400;color:#000;letter-spacing:0.2px">N</div>
<div class="r" style="left:787px;top:212px;width:101px;height:15px;background:#f8f8f8;border-bottom:1px solid #c8c8c8"></div>
<div class="r" style="left:225px;top:229px;width:29px;height:15px;background:#f8f8f8;border-bottom:1px solid #c8c8c8"></div>
<div class="t" style="left:225.8px;top:231.94px;font-size:10px;line-height:10px;font-weight:400;color:#000;letter-spacing:0.2px">4.</div>
<div class="r" style="left:256px;top:229px;width:45px;height:15px;background:#f8f8f8;border-bottom:1px solid #c8c8c8"></div>
<div class="r" style="left:303px;top:229px;width:102px;height:15px;background:#f8f8f8;border-bottom:1px solid #c8c8c8"></div>
<div class="t" style="left:303.8px;top:231.94px;font-size:10px;line-height:10px;font-weight:400;color:#000;letter-spacing:0.2px">plan_opt</div>
<div class="r" style="left:407px;top:229px;width:53px;height:15px;background:#f8f8f8;border-bottom:1px solid #c8c8c8"></div>
<div class="t" style="left:407.8px;top:231.94px;font-size:10px;line-height:10px;font-weight:400;color:#000;letter-spacing:0.2px">integer</div>
<div class="r" style="left:462px;top:229px;width:68px;height:15px;background:#f8f8f8;border-bottom:1px solid #c8c8c8"></div>
<div class="t" style="left:462.8px;top:231.94px;font-size:10px;line-height:10px;font-weight:400;color:#000;letter-spacing:0.2px">4</div>
<div class="r" style="left:532px;top:229px;width:77px;height:15px;background:#f8f8f8;border-bottom:1px solid #c8c8c8"></div>
<div class="t" style="left:532.8px;top:231.94px;font-size:10px;line-height:10px;font-weight:400;color:#000;letter-spacing:0.2px">No</div>
<div class="r" style="left:611px;top:229px;width:71px;height:15px;background:#f8f8f8;border-bottom:1px solid #c8c8c8"></div>
<div class="r" style="left:684px;top:229px;width:101px;height:15px;background:#f8f8f8;border-bottom:1px solid #c8c8c8"></div>
<div class="t" style="left:684.8px;top:231.94px;font-size:10px;line-height:10px;font-weight:400;color:#000;letter-spacing:0.2px">N</div>
<div class="r" style="left:787px;top:229px;width:101px;height:15px;background:#f8f8f8;border-bottom:1px solid #c8c8c8"></div>
<div class="r" style="left:225px;top:246px;width:29px;height:15px;background:#f8f8f8;border-bottom:1px solid #c8c8c8"></div>
<div class="t" style="left:225.8px;top:248.93px;font-size:10px;line-height:10px;font-weight:400;color:#000;letter-spacing:0.2px">5.</div>
<div class="r" style="left:256px;top:246px;width:45px;height:15px;background:#f8f8f8;border-bottom:1px solid #c8c8c8"></div>
<div class="r" style="left:303px;top:246px;width:102px;height:15px;background:#f8f8f8;border-bottom:1px solid #c8c8c8"></div>
<div class="t" style="left:303.8px;top:248.93px;font-size:10px;line-height:10px;font-weight:400;color:#000;letter-spacing:0.2px">all_l</div>
<div class="r" style="left:407px;top:246px;width:53px;height:15px;background:#f8f8f8;border-bottom:1px solid #c8c8c8"></div>
<div class="t" style="left:407.8px;top:248.93px;font-size:10px;line-height:10px;font-weight:400;color:#000;letter-spacing:0.2px">string</div>
<div class="r" style="left:462px;top:246px;width:68px;height:15px;background:#f8f8f8;border-bottom:1px solid #c8c8c8"></div>
<div class="r" style="left:532px;top:246px;width:77px;height:15px;background:#f8f8f8;border-bottom:1px solid #c8c8c8"></div>
<div class="t" style="left:532.8px;top:248.93px;font-size:10px;line-height:10px;font-weight:400;color:#000;letter-spacing:0.2px">No</div>
<div class="r" style="left:611px;top:246px;width:71px;height:15px;background:#f8f8f8;border-bottom:1px solid #c8c8c8"></div>
<div class="r" style="left:684px;top:246px;width:101px;height:15px;background:#f8f8f8;border-bottom:1px solid #c8c8c8"></div>
<div class="t" style="left:684.8px;top:248.93px;font-size:10px;line-height:10px;font-weight:400;color:#000;letter-spacing:0.2px">N</div>
<div class="r" style="left:787px;top:246px;width:101px;height:15px;background:#f8f8f8;border-bottom:1px solid #c8c8c8"></div>
<div class="r" style="left:225px;top:263px;width:29px;height:15px;background:#f8f8f8;border-bottom:1px solid #c8c8c8"></div>
<div class="t" style="left:225.8px;top:265.94px;font-size:10px;line-height:10px;font-weight:400;color:#000;letter-spacing:0.2px">6.</div>
<div class="r" style="left:256px;top:263px;width:45px;height:15px;background:#f8f8f8;border-bottom:1px solid #c8c8c8"></div>
<div class="r" style="left:303px;top:263px;width:102px;height:15px;background:#f8f8f8;border-bottom:1px solid #c8c8c8"></div>
<div class="t" style="left:303.8px;top:265.94px;font-size:10px;line-height:10px;font-weight:400;color:#000;letter-spacing:0.2px">sys_id</div>
<div class="r" style="left:407px;top:263px;width:53px;height:15px;background:#f8f8f8;border-bottom:1px solid #c8c8c8"></div>
<div class="t" style="left:407.8px;top:265.94px;font-size:10px;line-height:10px;font-weight:400;color:#000;letter-spacing:0.2px">integer</div>
<div class="r" style="left:462px;top:263px;width:68px;height:15px;background:#f8f8f8;border-bottom:1px solid #c8c8c8"></div>
<div class="t" style="left:462.8px;top:265.94px;font-size:10px;line-height:10px;font-weight:400;color:#000;letter-spacing:0.2px">4</div>
<div class="r" style="left:532px;top:263px;width:77px;height:15px;background:#f8f8f8;border-bottom:1px solid #c8c8c8"></div>
<div class="t" style="left:532.8px;top:265.94px;font-size:10px;line-height:10px;font-weight:400;color:#000;letter-spacing:0.2px">No</div>
<div class="r" style="left:611px;top:263px;width:71px;height:15px;background:#f8f8f8;border-bottom:1px solid #c8c8c8"></div>
<div class="r" style="left:684px;top:263px;width:101px;height:15px;background:#f8f8f8;border-bottom:1px solid #c8c8c8"></div>
<div class="t" style="left:684.8px;top:265.94px;font-size:10px;line-height:10px;font-weight:400;color:#000;letter-spacing:0.2px">N</div>
<div class="r" style="left:787px;top:263px;width:101px;height:15px;background:#f8f8f8;border-bottom:1px solid #c8c8c8"></div>
<div class="r" style="left:225px;top:280px;width:29px;height:15px;background:#f8f8f8;border-bottom:1px solid #c8c8c8"></div>
<div class="t" style="left:225.8px;top:282.94px;font-size:10px;line-height:10px;font-weight:400;color:#000;letter-spacing:0.2px">7.</div>
<div class="r" style="left:256px;top:280px;width:45px;height:15px;background:#f8f8f8;border-bottom:1px solid #c8c8c8"></div>
<div class="r" style="left:303px;top:280px;width:102px;height:15px;background:#f8f8f8;border-bottom:1px solid #c8c8c8"></div>
<div class="t" style="left:303.8px;top:282.94px;font-size:10px;line-height:10px;font-weight:400;color:#000;letter-spacing:0.2px">stripped_codes</div>
<div class="r" style="left:407px;top:280px;width:53px;height:15px;background:#f8f8f8;border-bottom:1px solid #c8c8c8"></div>
<div class="t" style="left:407.8px;top:282.94px;font-size:10px;line-height:10px;font-weight:400;color:#000;letter-spacing:0.2px">string</div>
<div class="r" style="left:462px;top:280px;width:68px;height:15px;background:#f8f8f8;border-bottom:1px solid #c8c8c8"></div>
<div class="r" style="left:532px;top:280px;width:77px;height:15px;background:#f8f8f8;border-bottom:1px solid #c8c8c8"></div>
<div class="t" style="left:532.8px;top:282.94px;font-size:10px;line-height:10px;font-weight:400;color:#000;letter-spacing:0.2px">No</div>
<div class="r" style="left:611px;top:280px;width:71px;height:15px;background:#f8f8f8;border-bottom:1px solid #c8c8c8"></div>
<div class="r" style="left:684px;top:280px;width:101px;height:15px;background:#f8f8f8;border-bottom:1px solid #c8c8c8"></div>
<div class="t" style="left:684.8px;top:282.94px;font-size:10px;line-height:10px;font-weight:400;color:#000;letter-spacing:0.2px">N</div>
<div class="r" style="left:787px;top:280px;width:101px;height:15px;background:#f8f8f8;border-bottom:1px solid #c8c8c8"></div>
<div class="r" style="left:220px;top:300px;width:680px;height:1px;background:#e6ebf0"></div>
<div class="r" style="left:220px;top:301px;width:680px;height:26px;background:#fcfcfc"></div>
<div class="r" style="left:222px;top:327px;width:676px;height:18px;background:#e1e5e9"></div>
<div class="t" style="left:235.5px;top:330.15px;font-size:14px;line-height:14px;font-weight:400;color:#111;letter-spacing:1px">Values</div>
<div class="r" style="left:484px;top:317px;width:406px;height:22px;background:#fff;border:1px solid #c8c8c8"></div>
<div class="t" style="left:493.5px;top:322.69px;font-size:11px;line-height:11px;font-weight:400;color:#222;">View</div>
<div class="t" style="left:528.5px;top:322.69px;font-size:11px;line-height:11px;font-weight:400;color:#d8c8a8;">|</div>
<div class="t" style="left:540.6px;top:322.69px;font-size:11px;line-height:11px;font-weight:400;color:#222;">Add</div>
<div class="t" style="left:571.2px;top:322.69px;font-size:11px;line-height:11px;font-weight:400;color:#d8c8a8;">|</div>
<div class="t" style="left:591.3px;top:322.69px;font-size:11px;line-height:11px;font-weight:400;color:#222;">Edit Values</div>
<div class="t" style="left:664.5px;top:322.69px;font-size:11px;line-height:11px;font-weight:400;color:#d8c8a8;">|</div>
<div class="t" style="left:680.5px;top:322.69px;font-size:11px;line-height:11px;font-weight:400;color:#222;">Import</div>
<div class="t" style="left:729.1px;top:322.69px;font-size:11px;line-height:11px;font-weight:400;color:#d8c8a8;">|</div>
<div class="t" style="left:743.8px;top:322.69px;font-size:11px;line-height:11px;font-weight:400;color:#222;">Export</div>
<div class="t" style="left:790.1px;top:322.69px;font-size:11px;line-height:11px;font-weight:400;color:#d8c8a8;">|</div>
<div class="t" style="left:804.4px;top:322.69px;font-size:11px;line-height:11px;font-weight:400;color:#222;">Store</div>
<div class="t" style="left:843.5px;top:322.69px;font-size:11px;line-height:11px;font-weight:400;color:#d8c8a8;">|</div>
<div class="t" style="left:856.9px;top:322.69px;font-size:11px;line-height:11px;font-weight:400;color:#222;">Print</div>
<div class="r" style="left:222px;top:349px;width:669px;height:367px;background:#fff;border:1px solid #000"></div>
<div class="r" style="left:225px;top:352px;width:75px;height:21px;background:#e8e8e8;border-right:1px solid #000;border-bottom:1px solid #000;border-left:1px solid #f4f4f4;border-top:1px solid #f4f4f4"></div>
<div class="t" style="left:236.5px;top:358.33px;font-size:10.6px;line-height:10.6px;font-weight:700;color:#666;-webkit-text-stroke:0.2px #666">division</div>
<div class="r" style="left:302px;top:352px;width:59px;height:21px;background:#e8e8e8;border-right:1px solid #000;border-bottom:1px solid #000;border-left:1px solid #f4f4f4;border-top:1px solid #f4f4f4"></div>
<div class="t" style="left:313.5px;top:358.33px;font-size:10.6px;line-height:10.6px;font-weight:700;color:#666;-webkit-text-stroke:0.2px #666">ee_id</div>
<div class="r" style="left:363px;top:352px;width:78px;height:21px;background:#e8e8e8;border-right:1px solid #000;border-bottom:1px solid #000;border-left:1px solid #f4f4f4;border-top:1px solid #f4f4f4"></div>
<div class="t" style="left:374.5px;top:358.33px;font-size:10.6px;line-height:10.6px;font-weight:700;color:#666;-webkit-text-stroke:0.2px #666">plan_no</div>
<div class="r" style="left:443px;top:352px;width:84px;height:21px;background:#e8e8e8;border-right:1px solid #000;border-bottom:1px solid #000;border-left:1px solid #f4f4f4;border-top:1px solid #f4f4f4"></div>
<div class="t" style="left:454.5px;top:358.33px;font-size:10.6px;line-height:10.6px;font-weight:700;color:#666;-webkit-text-stroke:0.2px #666">plan_opt</div>
<div class="r" style="left:529px;top:352px;width:158px;height:21px;background:#e8e8e8;border-right:1px solid #000;border-bottom:1px solid #000;border-left:1px solid #f4f4f4;border-top:1px solid #f4f4f4"></div>
<div class="t" style="left:540.5px;top:358.33px;font-size:10.6px;line-height:10.6px;font-weight:700;color:#666;-webkit-text-stroke:0.2px #666">all_l</div>
<div class="r" style="left:689px;top:352px;width:66px;height:21px;background:#e8e8e8;border-right:1px solid #000;border-bottom:1px solid #000;border-left:1px solid #f4f4f4;border-top:1px solid #f4f4f4"></div>
<div class="t" style="left:700.5px;top:358.33px;font-size:10.6px;line-height:10.6px;font-weight:700;color:#666;-webkit-text-stroke:0.2px #666">sys_id</div>
<div class="r" style="left:757px;top:352px;width:131px;height:21px;background:#e8e8e8;border-right:1px solid #000;border-bottom:1px solid #000;border-left:1px solid #f4f4f4;border-top:1px solid #f4f4f4"></div>
<div class="t" style="left:768.5px;top:358.33px;font-size:10.6px;line-height:10.6px;font-weight:700;color:#666;-webkit-text-stroke:0.2px #666">stripped_codes</div>
<div class="r" style="left:225px;top:375px;width:75px;height:15px;background:#f8f8f8;border-bottom:1px solid #c8c8c8"></div>
<div class="t" style="left:226px;top:377.94px;font-size:10px;line-height:10px;font-weight:400;color:#000;"><span style="letter-spacing:-0.6px">CORS</span></div>
<div class="r" style="left:302px;top:375px;width:59px;height:15px;background:#f8f8f8;border-bottom:1px solid #c8c8c8"></div>
<div class="r" style="left:363px;top:375px;width:78px;height:15px;background:#f8f8f8;border-bottom:1px solid #c8c8c8"></div>
<div class="t" style="left:363.8px;top:377.94px;font-size:10px;line-height:10px;font-weight:400;color:#000;letter-spacing:0.2px">100</div>
<div class="r" style="left:443px;top:375px;width:84px;height:15px;background:#f8f8f8;border-bottom:1px solid #c8c8c8"></div>
<div class="t" style="left:443.8px;top:377.94px;font-size:10px;line-height:10px;font-weight:400;color:#000;letter-spacing:0.2px">32</div>
<div class="r" style="left:529px;top:375px;width:158px;height:15px;background:#f8f8f8;border-bottom:1px solid #c8c8c8"></div>
<div class="t" style="left:529.7px;top:377.94px;font-size:10px;line-height:10px;font-weight:400;color:#000;"><span style="letter-spacing:-0.6px">CORS</span>_</div>
<div class="t" style="left:590.8px;top:377.94px;font-size:10px;line-height:10px;font-weight:400;color:#000;">_100_32</div>
<div class="r" style="left:689px;top:375px;width:66px;height:15px;background:#f8f8f8;border-bottom:1px solid #c8c8c8"></div>
<div class="t" style="left:689.8px;top:377.94px;font-size:10px;line-height:10px;font-weight:400;color:#000;letter-spacing:0.2px">1</div>
<div class="r" style="left:757px;top:375px;width:131px;height:15px;background:#f8f8f8;border-bottom:1px solid #c8c8c8"></div>
<div class="t" style="left:757.7px;top:377.94px;font-size:10px;line-height:10px;font-weight:400;color:#000;"><span style="letter-spacing:-0.6px">CORS</span>_100_32</div>
<div class="r" style="left:225px;top:392px;width:75px;height:15px;background:#f8f8f8;border-bottom:1px solid #c8c8c8"></div>
<div class="t" style="left:226px;top:394.94px;font-size:10px;line-height:10px;font-weight:400;color:#000;"><span style="letter-spacing:-0.6px">CORS</span></div>
<div class="r" style="left:302px;top:392px;width:59px;height:15px;background:#f8f8f8;border-bottom:1px solid #c8c8c8"></div>
<div class="r" style="left:363px;top:392px;width:78px;height:15px;background:#f8f8f8;border-bottom:1px solid #c8c8c8"></div>
<div class="t" style="left:363.8px;top:394.94px;font-size:10px;line-height:10px;font-weight:400;color:#000;letter-spacing:0.2px">100</div>
<div class="r" style="left:443px;top:392px;width:84px;height:15px;background:#f8f8f8;border-bottom:1px solid #c8c8c8"></div>
<div class="t" style="left:443.8px;top:394.94px;font-size:10px;line-height:10px;font-weight:400;color:#000;letter-spacing:0.2px">32</div>
<div class="r" style="left:529px;top:392px;width:158px;height:15px;background:#f8f8f8;border-bottom:1px solid #c8c8c8"></div>
<div class="t" style="left:529.7px;top:394.94px;font-size:10px;line-height:10px;font-weight:400;color:#000;"><span style="letter-spacing:-0.6px">CORS</span>_</div>
<div class="t" style="left:590.8px;top:394.94px;font-size:10px;line-height:10px;font-weight:400;color:#000;">_100_32</div>
<div class="r" style="left:689px;top:392px;width:66px;height:15px;background:#f8f8f8;border-bottom:1px solid #c8c8c8"></div>
<div class="t" style="left:689.8px;top:394.94px;font-size:10px;line-height:10px;font-weight:400;color:#000;letter-spacing:0.2px">2</div>
<div class="r" style="left:757px;top:392px;width:131px;height:15px;background:#f8f8f8;border-bottom:1px solid #c8c8c8"></div>
<div class="t" style="left:757.7px;top:394.94px;font-size:10px;line-height:10px;font-weight:400;color:#000;"><span style="letter-spacing:-0.6px">CORS</span>_100_32</div>
<div class="r" style="left:225px;top:409px;width:75px;height:15px;background:#f8f8f8;border-bottom:1px solid #c8c8c8"></div>
<div class="t" style="left:226px;top:411.94px;font-size:10px;line-height:10px;font-weight:400;color:#000;"><span style="letter-spacing:-0.6px">CORS</span></div>
<div class="r" style="left:302px;top:409px;width:59px;height:15px;background:#f8f8f8;border-bottom:1px solid #c8c8c8"></div>
<div class="r" style="left:363px;top:409px;width:78px;height:15px;background:#f8f8f8;border-bottom:1px solid #c8c8c8"></div>
<div class="t" style="left:363.8px;top:411.94px;font-size:10px;line-height:10px;font-weight:400;color:#000;letter-spacing:0.2px">100</div>
<div class="r" style="left:443px;top:409px;width:84px;height:15px;background:#f8f8f8;border-bottom:1px solid #c8c8c8"></div>
<div class="t" style="left:443.8px;top:411.94px;font-size:10px;line-height:10px;font-weight:400;color:#000;letter-spacing:0.2px">32</div>
<div class="r" style="left:529px;top:409px;width:158px;height:15px;background:#f8f8f8;border-bottom:1px solid #c8c8c8"></div>
<div class="t" style="left:529.7px;top:411.94px;font-size:10px;line-height:10px;font-weight:400;color:#000;"><span style="letter-spacing:-0.6px">CORS</span>_</div>
<div class="t" style="left:590.8px;top:411.94px;font-size:10px;line-height:10px;font-weight:400;color:#000;">_100_32</div>
<div class="r" style="left:689px;top:409px;width:66px;height:15px;background:#f8f8f8;border-bottom:1px solid #c8c8c8"></div>
<div class="t" style="left:689.8px;top:411.94px;font-size:10px;line-height:10px;font-weight:400;color:#000;letter-spacing:0.2px">3</div>
<div class="r" style="left:757px;top:409px;width:131px;height:15px;background:#f8f8f8;border-bottom:1px solid #c8c8c8"></div>
<div class="t" style="left:757.7px;top:411.94px;font-size:10px;line-height:10px;font-weight:400;color:#000;"><span style="letter-spacing:-0.6px">CORS</span>_100_32</div>
<div class="r" style="left:225px;top:426px;width:75px;height:15px;background:#f8f8f8;border-bottom:1px solid #c8c8c8"></div>
<div class="t" style="left:226px;top:428.94px;font-size:10px;line-height:10px;font-weight:400;color:#000;"><span style="letter-spacing:-0.6px">CORS</span></div>
<div class="r" style="left:302px;top:426px;width:59px;height:15px;background:#f8f8f8;border-bottom:1px solid #c8c8c8"></div>
<div class="r" style="left:363px;top:426px;width:78px;height:15px;background:#f8f8f8;border-bottom:1px solid #c8c8c8"></div>
<div class="t" style="left:363.8px;top:428.94px;font-size:10px;line-height:10px;font-weight:400;color:#000;letter-spacing:0.2px">100</div>
<div class="r" style="left:443px;top:426px;width:84px;height:15px;background:#f8f8f8;border-bottom:1px solid #c8c8c8"></div>
<div class="t" style="left:443.8px;top:428.94px;font-size:10px;line-height:10px;font-weight:400;color:#000;letter-spacing:0.2px">12</div>
<div class="r" style="left:529px;top:426px;width:158px;height:15px;background:#f8f8f8;border-bottom:1px solid #c8c8c8"></div>
<div class="t" style="left:529.7px;top:428.94px;font-size:10px;line-height:10px;font-weight:400;color:#000;"><span style="letter-spacing:-0.6px">CORS</span>_</div>
<div class="t" style="left:590.8px;top:428.94px;font-size:10px;line-height:10px;font-weight:400;color:#000;">_100_12</div>
<div class="r" style="left:689px;top:426px;width:66px;height:15px;background:#f8f8f8;border-bottom:1px solid #c8c8c8"></div>
<div class="t" style="left:689.8px;top:428.94px;font-size:10px;line-height:10px;font-weight:400;color:#000;letter-spacing:0.2px">4</div>
<div class="r" style="left:757px;top:426px;width:131px;height:15px;background:#f8f8f8;border-bottom:1px solid #c8c8c8"></div>
<div class="t" style="left:757.7px;top:428.94px;font-size:10px;line-height:10px;font-weight:400;color:#000;"><span style="letter-spacing:-0.6px">CORS</span>_100_12</div>
<div class="r" style="left:225px;top:443px;width:75px;height:15px;background:#f8f8f8;border-bottom:1px solid #c8c8c8"></div>
<div class="t" style="left:226px;top:445.94px;font-size:10px;line-height:10px;font-weight:400;color:#000;"><span style="letter-spacing:-0.6px">CORS</span></div>
<div class="r" style="left:302px;top:443px;width:59px;height:15px;background:#f8f8f8;border-bottom:1px solid #c8c8c8"></div>
<div class="r" style="left:363px;top:443px;width:78px;height:15px;background:#f8f8f8;border-bottom:1px solid #c8c8c8"></div>
<div class="t" style="left:363.8px;top:445.94px;font-size:10px;line-height:10px;font-weight:400;color:#000;letter-spacing:0.2px">100</div>
<div class="r" style="left:443px;top:443px;width:84px;height:15px;background:#f8f8f8;border-bottom:1px solid #c8c8c8"></div>
<div class="t" style="left:443.8px;top:445.94px;font-size:10px;line-height:10px;font-weight:400;color:#000;letter-spacing:0.2px">32</div>
<div class="r" style="left:529px;top:443px;width:158px;height:15px;background:#f8f8f8;border-bottom:1px solid #c8c8c8"></div>
<div class="t" style="left:529.7px;top:445.94px;font-size:10px;line-height:10px;font-weight:400;color:#000;"><span style="letter-spacing:-0.6px">CORS</span>_</div>
<div class="t" style="left:590.8px;top:445.94px;font-size:10px;line-height:10px;font-weight:400;color:#000;">_100_32</div>
<div class="r" style="left:689px;top:443px;width:66px;height:15px;background:#f8f8f8;border-bottom:1px solid #c8c8c8"></div>
<div class="t" style="left:689.8px;top:445.94px;font-size:10px;line-height:10px;font-weight:400;color:#000;letter-spacing:0.2px">5</div>
<div class="r" style="left:757px;top:443px;width:131px;height:15px;background:#f8f8f8;border-bottom:1px solid #c8c8c8"></div>
<div class="t" style="left:757.7px;top:445.94px;font-size:10px;line-height:10px;font-weight:400;color:#000;"><span style="letter-spacing:-0.6px">CORS</span>_100_32</div>
<div class="r" style="left:225px;top:460px;width:75px;height:15px;background:#f8f8f8;border-bottom:1px solid #c8c8c8"></div>
<div class="t" style="left:226px;top:462.94px;font-size:10px;line-height:10px;font-weight:400;color:#000;"><span style="letter-spacing:-0.6px">CORS</span></div>
<div class="r" style="left:302px;top:460px;width:59px;height:15px;background:#f8f8f8;border-bottom:1px solid #c8c8c8"></div>
<div class="r" style="left:363px;top:460px;width:78px;height:15px;background:#f8f8f8;border-bottom:1px solid #c8c8c8"></div>
<div class="t" style="left:363.8px;top:462.94px;font-size:10px;line-height:10px;font-weight:400;color:#000;letter-spacing:0.2px">100</div>
<div class="r" style="left:443px;top:460px;width:84px;height:15px;background:#f8f8f8;border-bottom:1px solid #c8c8c8"></div>
<div class="t" style="left:443.8px;top:462.94px;font-size:10px;line-height:10px;font-weight:400;color:#000;letter-spacing:0.2px">32</div>
<div class="r" style="left:529px;top:460px;width:158px;height:15px;background:#f8f8f8;border-bottom:1px solid #c8c8c8"></div>
<div class="t" style="left:529.7px;top:462.94px;font-size:10px;line-height:10px;font-weight:400;color:#000;"><span style="letter-spacing:-0.6px">CORS</span>_</div>
<div class="t" style="left:590.8px;top:462.94px;font-size:10px;line-height:10px;font-weight:400;color:#000;">_100_32</div>
<div class="r" style="left:689px;top:460px;width:66px;height:15px;background:#f8f8f8;border-bottom:1px solid #c8c8c8"></div>
<div class="t" style="left:689.8px;top:462.94px;font-size:10px;line-height:10px;font-weight:400;color:#000;letter-spacing:0.2px">6</div>
<div class="r" style="left:757px;top:460px;width:131px;height:15px;background:#f8f8f8;border-bottom:1px solid #c8c8c8"></div>
<div class="t" style="left:757.7px;top:462.94px;font-size:10px;line-height:10px;font-weight:400;color:#000;"><span style="letter-spacing:-0.6px">CORS</span>_100_32</div>
<div class="r" style="left:225px;top:477px;width:75px;height:15px;background:#f8f8f8;border-bottom:1px solid #c8c8c8"></div>
<div class="t" style="left:226px;top:479.94px;font-size:10px;line-height:10px;font-weight:400;color:#000;"><span style="letter-spacing:-0.6px">CORS</span></div>
<div class="r" style="left:302px;top:477px;width:59px;height:15px;background:#f8f8f8;border-bottom:1px solid #c8c8c8"></div>
<div class="r" style="left:363px;top:477px;width:78px;height:15px;background:#f8f8f8;border-bottom:1px solid #c8c8c8"></div>
<div class="t" style="left:363.8px;top:479.94px;font-size:10px;line-height:10px;font-weight:400;color:#000;letter-spacing:0.2px">100</div>
<div class="r" style="left:443px;top:477px;width:84px;height:15px;background:#f8f8f8;border-bottom:1px solid #c8c8c8"></div>
<div class="t" style="left:443.8px;top:479.94px;font-size:10px;line-height:10px;font-weight:400;color:#000;letter-spacing:0.2px">32</div>
<div class="r" style="left:529px;top:477px;width:158px;height:15px;background:#f8f8f8;border-bottom:1px solid #c8c8c8"></div>
<div class="t" style="left:529.7px;top:479.94px;font-size:10px;line-height:10px;font-weight:400;color:#000;"><span style="letter-spacing:-0.6px">CORS</span>_</div>
<div class="t" style="left:590.8px;top:479.94px;font-size:10px;line-height:10px;font-weight:400;color:#000;">_100_32</div>
<div class="r" style="left:689px;top:477px;width:66px;height:15px;background:#f8f8f8;border-bottom:1px solid #c8c8c8"></div>
<div class="t" style="left:689.8px;top:479.94px;font-size:10px;line-height:10px;font-weight:400;color:#000;letter-spacing:0.2px">7</div>
<div class="r" style="left:757px;top:477px;width:131px;height:15px;background:#f8f8f8;border-bottom:1px solid #c8c8c8"></div>
<div class="t" style="left:757.7px;top:479.94px;font-size:10px;line-height:10px;font-weight:400;color:#000;"><span style="letter-spacing:-0.6px">CORS</span>_100_32</div>
<div class="r" style="left:225px;top:494px;width:75px;height:15px;background:#f8f8f8;border-bottom:1px solid #c8c8c8"></div>
<div class="t" style="left:226px;top:496.94px;font-size:10px;line-height:10px;font-weight:400;color:#000;"><span style="letter-spacing:-0.6px">CORS</span></div>
<div class="r" style="left:302px;top:494px;width:59px;height:15px;background:#f8f8f8;border-bottom:1px solid #c8c8c8"></div>
<div class="r" style="left:363px;top:494px;width:78px;height:15px;background:#f8f8f8;border-bottom:1px solid #c8c8c8"></div>
<div class="t" style="left:363.8px;top:496.94px;font-size:10px;line-height:10px;font-weight:400;color:#000;letter-spacing:0.2px">100</div>
<div class="r" style="left:443px;top:494px;width:84px;height:15px;background:#f8f8f8;border-bottom:1px solid #c8c8c8"></div>
<div class="t" style="left:443.8px;top:496.94px;font-size:10px;line-height:10px;font-weight:400;color:#000;letter-spacing:0.2px">12</div>
<div class="r" style="left:529px;top:494px;width:158px;height:15px;background:#f8f8f8;border-bottom:1px solid #c8c8c8"></div>
<div class="t" style="left:529.7px;top:496.94px;font-size:10px;line-height:10px;font-weight:400;color:#000;"><span style="letter-spacing:-0.6px">CORS</span>_</div>
<div class="t" style="left:590.8px;top:496.94px;font-size:10px;line-height:10px;font-weight:400;color:#000;">_100_12</div>
<div class="r" style="left:689px;top:494px;width:66px;height:15px;background:#f8f8f8;border-bottom:1px solid #c8c8c8"></div>
<div class="t" style="left:689.8px;top:496.94px;font-size:10px;line-height:10px;font-weight:400;color:#000;letter-spacing:0.2px">8</div>
<div class="r" style="left:757px;top:494px;width:131px;height:15px;background:#f8f8f8;border-bottom:1px solid #c8c8c8"></div>
<div class="t" style="left:757.7px;top:496.94px;font-size:10px;line-height:10px;font-weight:400;color:#000;"><span style="letter-spacing:-0.6px">CORS</span>_100_12</div>
<div class="r" style="left:225px;top:511px;width:75px;height:15px;background:#f8f8f8;border-bottom:1px solid #c8c8c8"></div>
<div class="t" style="left:226px;top:513.93px;font-size:10px;line-height:10px;font-weight:400;color:#000;"><span style="letter-spacing:-0.6px">CORS</span></div>
<div class="r" style="left:302px;top:511px;width:59px;height:15px;background:#f8f8f8;border-bottom:1px solid #c8c8c8"></div>
<div class="r" style="left:363px;top:511px;width:78px;height:15px;background:#f8f8f8;border-bottom:1px solid #c8c8c8"></div>
<div class="t" style="left:363.8px;top:513.93px;font-size:10px;line-height:10px;font-weight:400;color:#000;letter-spacing:0.2px">100</div>
<div class="r" style="left:443px;top:511px;width:84px;height:15px;background:#f8f8f8;border-bottom:1px solid #c8c8c8"></div>
<div class="t" style="left:443.8px;top:513.93px;font-size:10px;line-height:10px;font-weight:400;color:#000;letter-spacing:0.2px">32</div>
<div class="r" style="left:529px;top:511px;width:158px;height:15px;background:#f8f8f8;border-bottom:1px solid #c8c8c8"></div>
<div class="t" style="left:529.7px;top:513.93px;font-size:10px;line-height:10px;font-weight:400;color:#000;"><span style="letter-spacing:-0.6px">CORS</span>_</div>
<div class="t" style="left:590.8px;top:513.93px;font-size:10px;line-height:10px;font-weight:400;color:#000;">_100_32</div>
<div class="r" style="left:689px;top:511px;width:66px;height:15px;background:#f8f8f8;border-bottom:1px solid #c8c8c8"></div>
<div class="t" style="left:689.8px;top:513.93px;font-size:10px;line-height:10px;font-weight:400;color:#000;letter-spacing:0.2px">9</div>
<div class="r" style="left:757px;top:511px;width:131px;height:15px;background:#f8f8f8;border-bottom:1px solid #c8c8c8"></div>
<div class="t" style="left:757.7px;top:513.93px;font-size:10px;line-height:10px;font-weight:400;color:#000;"><span style="letter-spacing:-0.6px">CORS</span>_100_32</div>
<div class="r" style="left:225px;top:528px;width:75px;height:15px;background:#f8f8f8;border-bottom:1px solid #c8c8c8"></div>
<div class="t" style="left:226px;top:530.93px;font-size:10px;line-height:10px;font-weight:400;color:#000;"><span style="letter-spacing:-0.6px">CORS</span></div>
<div class="r" style="left:302px;top:528px;width:59px;height:15px;background:#f8f8f8;border-bottom:1px solid #c8c8c8"></div>
<div class="r" style="left:363px;top:528px;width:78px;height:15px;background:#f8f8f8;border-bottom:1px solid #c8c8c8"></div>
<div class="t" style="left:363.8px;top:530.93px;font-size:10px;line-height:10px;font-weight:400;color:#000;letter-spacing:0.2px">100</div>
<div class="r" style="left:443px;top:528px;width:84px;height:15px;background:#f8f8f8;border-bottom:1px solid #c8c8c8"></div>
<div class="t" style="left:443.8px;top:530.93px;font-size:10px;line-height:10px;font-weight:400;color:#000;letter-spacing:0.2px">32</div>
<div class="r" style="left:529px;top:528px;width:158px;height:15px;background:#f8f8f8;border-bottom:1px solid #c8c8c8"></div>
<div class="t" style="left:529.7px;top:530.93px;font-size:10px;line-height:10px;font-weight:400;color:#000;"><span style="letter-spacing:-0.6px">CORS</span>_</div>
<div class="t" style="left:590.8px;top:530.93px;font-size:10px;line-height:10px;font-weight:400;color:#000;">_100_32</div>
<div class="r" style="left:689px;top:528px;width:66px;height:15px;background:#f8f8f8;border-bottom:1px solid #c8c8c8"></div>
<div class="t" style="left:689.8px;top:530.93px;font-size:10px;line-height:10px;font-weight:400;color:#000;letter-spacing:0.2px">10</div>
<div class="r" style="left:757px;top:528px;width:131px;height:15px;background:#f8f8f8;border-bottom:1px solid #c8c8c8"></div>
<div class="t" style="left:757.7px;top:530.93px;font-size:10px;line-height:10px;font-weight:400;color:#000;"><span style="letter-spacing:-0.6px">CORS</span>_100_32</div>
<div class="r" style="left:225px;top:545px;width:75px;height:15px;background:#f8f8f8;border-bottom:1px solid #c8c8c8"></div>
<div class="t" style="left:226px;top:547.93px;font-size:10px;line-height:10px;font-weight:400;color:#000;"><span style="letter-spacing:-0.6px">CORS</span></div>
<div class="r" style="left:302px;top:545px;width:59px;height:15px;background:#f8f8f8;border-bottom:1px solid #c8c8c8"></div>
<div class="r" style="left:363px;top:545px;width:78px;height:15px;background:#f8f8f8;border-bottom:1px solid #c8c8c8"></div>
<div class="t" style="left:363.8px;top:547.93px;font-size:10px;line-height:10px;font-weight:400;color:#000;letter-spacing:0.2px">100</div>
<div class="r" style="left:443px;top:545px;width:84px;height:15px;background:#f8f8f8;border-bottom:1px solid #c8c8c8"></div>
<div class="t" style="left:443.8px;top:547.93px;font-size:10px;line-height:10px;font-weight:400;color:#000;letter-spacing:0.2px">32</div>
<div class="r" style="left:529px;top:545px;width:158px;height:15px;background:#f8f8f8;border-bottom:1px solid #c8c8c8"></div>
<div class="t" style="left:529.7px;top:547.93px;font-size:10px;line-height:10px;font-weight:400;color:#000;"><span style="letter-spacing:-0.6px">CORS</span>_</div>
<div class="t" style="left:590.8px;top:547.93px;font-size:10px;line-height:10px;font-weight:400;color:#000;">_100_32</div>
<div class="r" style="left:689px;top:545px;width:66px;height:15px;background:#f8f8f8;border-bottom:1px solid #c8c8c8"></div>
<div class="t" style="left:689.8px;top:547.93px;font-size:10px;line-height:10px;font-weight:400;color:#000;letter-spacing:0.2px">11</div>
<div class="r" style="left:757px;top:545px;width:131px;height:15px;background:#f8f8f8;border-bottom:1px solid #c8c8c8"></div>
<div class="t" style="left:757.7px;top:547.93px;font-size:10px;line-height:10px;font-weight:400;color:#000;"><span style="letter-spacing:-0.6px">CORS</span>_100_32</div>
<div class="r" style="left:225px;top:562px;width:75px;height:15px;background:#f8f8f8;border-bottom:1px solid #c8c8c8"></div>
<div class="t" style="left:226px;top:564.93px;font-size:10px;line-height:10px;font-weight:400;color:#000;"><span style="letter-spacing:-0.6px">CORS</span></div>
<div class="r" style="left:302px;top:562px;width:59px;height:15px;background:#f8f8f8;border-bottom:1px solid #c8c8c8"></div>
<div class="r" style="left:363px;top:562px;width:78px;height:15px;background:#f8f8f8;border-bottom:1px solid #c8c8c8"></div>
<div class="t" style="left:363.8px;top:564.93px;font-size:10px;line-height:10px;font-weight:400;color:#000;letter-spacing:0.2px">100</div>
<div class="r" style="left:443px;top:562px;width:84px;height:15px;background:#f8f8f8;border-bottom:1px solid #c8c8c8"></div>
<div class="t" style="left:443.8px;top:564.93px;font-size:10px;line-height:10px;font-weight:400;color:#000;letter-spacing:0.2px">32</div>
<div class="r" style="left:529px;top:562px;width:158px;height:15px;background:#f8f8f8;border-bottom:1px solid #c8c8c8"></div>
<div class="t" style="left:529.7px;top:564.93px;font-size:10px;line-height:10px;font-weight:400;color:#000;"><span style="letter-spacing:-0.6px">CORS</span>_</div>
<div class="t" style="left:590.8px;top:564.93px;font-size:10px;line-height:10px;font-weight:400;color:#000;">_100_32</div>
<div class="r" style="left:689px;top:562px;width:66px;height:15px;background:#f8f8f8;border-bottom:1px solid #c8c8c8"></div>
<div class="t" style="left:689.8px;top:564.93px;font-size:10px;line-height:10px;font-weight:400;color:#000;letter-spacing:0.2px">12</div>
<div class="r" style="left:757px;top:562px;width:131px;height:15px;background:#f8f8f8;border-bottom:1px solid #c8c8c8"></div>
<div class="t" style="left:757.7px;top:564.93px;font-size:10px;line-height:10px;font-weight:400;color:#000;"><span style="letter-spacing:-0.6px">CORS</span>_100_32</div>
<div class="r" style="left:225px;top:579px;width:75px;height:15px;background:#f8f8f8;border-bottom:1px solid #c8c8c8"></div>
<div class="t" style="left:226px;top:581.93px;font-size:10px;line-height:10px;font-weight:400;color:#000;"><span style="letter-spacing:-0.6px">CORS</span></div>
<div class="r" style="left:302px;top:579px;width:59px;height:15px;background:#f8f8f8;border-bottom:1px solid #c8c8c8"></div>
<div class="r" style="left:363px;top:579px;width:78px;height:15px;background:#f8f8f8;border-bottom:1px solid #c8c8c8"></div>
<div class="t" style="left:363.8px;top:581.93px;font-size:10px;line-height:10px;font-weight:400;color:#000;letter-spacing:0.2px">100</div>
<div class="r" style="left:443px;top:579px;width:84px;height:15px;background:#f8f8f8;border-bottom:1px solid #c8c8c8"></div>
<div class="t" style="left:443.8px;top:581.93px;font-size:10px;line-height:10px;font-weight:400;color:#000;letter-spacing:0.2px">32</div>
<div class="r" style="left:529px;top:579px;width:158px;height:15px;background:#f8f8f8;border-bottom:1px solid #c8c8c8"></div>
<div class="t" style="left:529.7px;top:581.93px;font-size:10px;line-height:10px;font-weight:400;color:#000;"><span style="letter-spacing:-0.6px">CORS</span>_</div>
<div class="t" style="left:590.8px;top:581.93px;font-size:10px;line-height:10px;font-weight:400;color:#000;">_100_32</div>
<div class="r" style="left:689px;top:579px;width:66px;height:15px;background:#f8f8f8;border-bottom:1px solid #c8c8c8"></div>
<div class="t" style="left:689.8px;top:581.93px;font-size:10px;line-height:10px;font-weight:400;color:#000;letter-spacing:0.2px">13</div>
<div class="r" style="left:757px;top:579px;width:131px;height:15px;background:#f8f8f8;border-bottom:1px solid #c8c8c8"></div>
<div class="t" style="left:757.7px;top:581.93px;font-size:10px;line-height:10px;font-weight:400;color:#000;"><span style="letter-spacing:-0.6px">CORS</span>_100_32</div>
<div class="r" style="left:225px;top:596px;width:75px;height:15px;background:#f8f8f8;border-bottom:1px solid #c8c8c8"></div>
<div class="t" style="left:226px;top:598.93px;font-size:10px;line-height:10px;font-weight:400;color:#000;"><span style="letter-spacing:-0.6px">CORS</span></div>
<div class="r" style="left:302px;top:596px;width:59px;height:15px;background:#f8f8f8;border-bottom:1px solid #c8c8c8"></div>
<div class="r" style="left:363px;top:596px;width:78px;height:15px;background:#f8f8f8;border-bottom:1px solid #c8c8c8"></div>
<div class="t" style="left:363.8px;top:598.93px;font-size:10px;line-height:10px;font-weight:400;color:#000;letter-spacing:0.2px">100</div>
<div class="r" style="left:443px;top:596px;width:84px;height:15px;background:#f8f8f8;border-bottom:1px solid #c8c8c8"></div>
<div class="t" style="left:443.8px;top:598.93px;font-size:10px;line-height:10px;font-weight:400;color:#000;letter-spacing:0.2px">32</div>
<div class="r" style="left:529px;top:596px;width:158px;height:15px;background:#f8f8f8;border-bottom:1px solid #c8c8c8"></div>
<div class="t" style="left:529.7px;top:598.93px;font-size:10px;line-height:10px;font-weight:400;color:#000;"><span style="letter-spacing:-0.6px">CORS</span>_</div>
<div class="t" style="left:590.8px;top:598.93px;font-size:10px;line-height:10px;font-weight:400;color:#000;">_100_32</div>
<div class="r" style="left:689px;top:596px;width:66px;height:15px;background:#f8f8f8;border-bottom:1px solid #c8c8c8"></div>
<div class="t" style="left:689.8px;top:598.93px;font-size:10px;line-height:10px;font-weight:400;color:#000;letter-spacing:0.2px">14</div>
<div class="r" style="left:757px;top:596px;width:131px;height:15px;background:#f8f8f8;border-bottom:1px solid #c8c8c8"></div>
<div class="t" style="left:757.7px;top:598.93px;font-size:10px;line-height:10px;font-weight:400;color:#000;"><span style="letter-spacing:-0.6px">CORS</span>_100_32</div>
<div class="r" style="left:225px;top:613px;width:75px;height:15px;background:#f8f8f8;border-bottom:1px solid #c8c8c8"></div>
<div class="t" style="left:226px;top:615.93px;font-size:10px;line-height:10px;font-weight:400;color:#000;"><span style="letter-spacing:-0.6px">CORS</span></div>
<div class="r" style="left:302px;top:613px;width:59px;height:15px;background:#f8f8f8;border-bottom:1px solid #c8c8c8"></div>
<div class="r" style="left:363px;top:613px;width:78px;height:15px;background:#f8f8f8;border-bottom:1px solid #c8c8c8"></div>
<div class="t" style="left:363.8px;top:615.93px;font-size:10px;line-height:10px;font-weight:400;color:#000;letter-spacing:0.2px">100</div>
<div class="r" style="left:443px;top:613px;width:84px;height:15px;background:#f8f8f8;border-bottom:1px solid #c8c8c8"></div>
<div class="t" style="left:443.8px;top:615.93px;font-size:10px;line-height:10px;font-weight:400;color:#000;letter-spacing:0.2px">12</div>
<div class="r" style="left:529px;top:613px;width:158px;height:15px;background:#f8f8f8;border-bottom:1px solid #c8c8c8"></div>
<div class="t" style="left:529.7px;top:615.93px;font-size:10px;line-height:10px;font-weight:400;color:#000;"><span style="letter-spacing:-0.6px">CORS</span>_</div>
<div class="t" style="left:590.8px;top:615.93px;font-size:10px;line-height:10px;font-weight:400;color:#000;">_100_12</div>
<div class="r" style="left:689px;top:613px;width:66px;height:15px;background:#f8f8f8;border-bottom:1px solid #c8c8c8"></div>
<div class="t" style="left:689.8px;top:615.93px;font-size:10px;line-height:10px;font-weight:400;color:#000;letter-spacing:0.2px">15</div>
<div class="r" style="left:757px;top:613px;width:131px;height:15px;background:#f8f8f8;border-bottom:1px solid #c8c8c8"></div>
<div class="t" style="left:757.7px;top:615.93px;font-size:10px;line-height:10px;font-weight:400;color:#000;"><span style="letter-spacing:-0.6px">CORS</span>_100_12</div>
<div class="r" style="left:225px;top:630px;width:75px;height:15px;background:#f8f8f8;border-bottom:1px solid #c8c8c8"></div>
<div class="t" style="left:226px;top:632.93px;font-size:10px;line-height:10px;font-weight:400;color:#000;"><span style="letter-spacing:-0.6px">CORS</span></div>
<div class="r" style="left:302px;top:630px;width:59px;height:15px;background:#f8f8f8;border-bottom:1px solid #c8c8c8"></div>
<div class="r" style="left:363px;top:630px;width:78px;height:15px;background:#f8f8f8;border-bottom:1px solid #c8c8c8"></div>
<div class="t" style="left:363.8px;top:632.93px;font-size:10px;line-height:10px;font-weight:400;color:#000;letter-spacing:0.2px">100</div>
<div class="r" style="left:443px;top:630px;width:84px;height:15px;background:#f8f8f8;border-bottom:1px solid #c8c8c8"></div>
<div class="t" style="left:443.8px;top:632.93px;font-size:10px;line-height:10px;font-weight:400;color:#000;letter-spacing:0.2px">32</div>
<div class="r" style="left:529px;top:630px;width:158px;height:15px;background:#f8f8f8;border-bottom:1px solid #c8c8c8"></div>
<div class="t" style="left:529.7px;top:632.93px;font-size:10px;line-height:10px;font-weight:400;color:#000;"><span style="letter-spacing:-0.6px">CORS</span>_</div>
<div class="t" style="left:590.8px;top:632.93px;font-size:10px;line-height:10px;font-weight:400;color:#000;">_100_32</div>
<div class="r" style="left:689px;top:630px;width:66px;height:15px;background:#f8f8f8;border-bottom:1px solid #c8c8c8"></div>
<div class="t" style="left:689.8px;top:632.93px;font-size:10px;line-height:10px;font-weight:400;color:#000;letter-spacing:0.2px">16</div>
<div class="r" style="left:757px;top:630px;width:131px;height:15px;background:#f8f8f8;border-bottom:1px solid #c8c8c8"></div>
<div class="t" style="left:757.7px;top:632.93px;font-size:10px;line-height:10px;font-weight:400;color:#000;"><span style="letter-spacing:-0.6px">CORS</span>_100_32</div>
<div class="r" style="left:225px;top:647px;width:75px;height:15px;background:#f8f8f8;border-bottom:1px solid #c8c8c8"></div>
<div class="t" style="left:226px;top:649.93px;font-size:10px;line-height:10px;font-weight:400;color:#000;"><span style="letter-spacing:-0.6px">CORS</span></div>
<div class="r" style="left:302px;top:647px;width:59px;height:15px;background:#f8f8f8;border-bottom:1px solid #c8c8c8"></div>
<div class="r" style="left:363px;top:647px;width:78px;height:15px;background:#f8f8f8;border-bottom:1px solid #c8c8c8"></div>
<div class="t" style="left:363.8px;top:649.93px;font-size:10px;line-height:10px;font-weight:400;color:#000;letter-spacing:0.2px">100</div>
<div class="r" style="left:443px;top:647px;width:84px;height:15px;background:#f8f8f8;border-bottom:1px solid #c8c8c8"></div>
<div class="t" style="left:443.8px;top:649.93px;font-size:10px;line-height:10px;font-weight:400;color:#000;letter-spacing:0.2px">12</div>
<div class="r" style="left:529px;top:647px;width:158px;height:15px;background:#f8f8f8;border-bottom:1px solid #c8c8c8"></div>
<div class="t" style="left:529.7px;top:649.93px;font-size:10px;line-height:10px;font-weight:400;color:#000;"><span style="letter-spacing:-0.6px">CORS</span>_</div>
<div class="t" style="left:590.8px;top:649.93px;font-size:10px;line-height:10px;font-weight:400;color:#000;">_100_12</div>
<div class="r" style="left:689px;top:647px;width:66px;height:15px;background:#f8f8f8;border-bottom:1px solid #c8c8c8"></div>
<div class="t" style="left:689.8px;top:649.93px;font-size:10px;line-height:10px;font-weight:400;color:#000;letter-spacing:0.2px">17</div>
<div class="r" style="left:757px;top:647px;width:131px;height:15px;background:#f8f8f8;border-bottom:1px solid #c8c8c8"></div>
<div class="t" style="left:757.7px;top:649.93px;font-size:10px;line-height:10px;font-weight:400;color:#000;"><span style="letter-spacing:-0.6px">CORS</span>_100_12</div>
<div class="r" style="left:225px;top:664px;width:75px;height:15px;background:#f8f8f8;border-bottom:1px solid #c8c8c8"></div>
<div class="t" style="left:226px;top:666.93px;font-size:10px;line-height:10px;font-weight:400;color:#000;"><span style="letter-spacing:-0.6px">CORS</span></div>
<div class="r" style="left:302px;top:664px;width:59px;height:15px;background:#f8f8f8;border-bottom:1px solid #c8c8c8"></div>
<div class="r" style="left:363px;top:664px;width:78px;height:15px;background:#f8f8f8;border-bottom:1px solid #c8c8c8"></div>
<div class="t" style="left:363.8px;top:666.93px;font-size:10px;line-height:10px;font-weight:400;color:#000;letter-spacing:0.2px">100</div>
<div class="r" style="left:443px;top:664px;width:84px;height:15px;background:#f8f8f8;border-bottom:1px solid #c8c8c8"></div>
<div class="t" style="left:443.8px;top:666.93px;font-size:10px;line-height:10px;font-weight:400;color:#000;letter-spacing:0.2px">12</div>
<div class="r" style="left:529px;top:664px;width:158px;height:15px;background:#f8f8f8;border-bottom:1px solid #c8c8c8"></div>
<div class="t" style="left:529.7px;top:666.93px;font-size:10px;line-height:10px;font-weight:400;color:#000;"><span style="letter-spacing:-0.6px">CORS</span>_</div>
<div class="t" style="left:590.8px;top:666.93px;font-size:10px;line-height:10px;font-weight:400;color:#000;">_100_12</div>
<div class="r" style="left:689px;top:664px;width:66px;height:15px;background:#f8f8f8;border-bottom:1px solid #c8c8c8"></div>
<div class="t" style="left:689.8px;top:666.93px;font-size:10px;line-height:10px;font-weight:400;color:#000;letter-spacing:0.2px">18</div>
<div class="r" style="left:757px;top:664px;width:131px;height:15px;background:#f8f8f8;border-bottom:1px solid #c8c8c8"></div>
<div class="t" style="left:757.7px;top:666.93px;font-size:10px;line-height:10px;font-weight:400;color:#000;"><span style="letter-spacing:-0.6px">CORS</span>_100_12</div>
<div class="r" style="left:225px;top:681px;width:75px;height:15px;background:#f8f8f8;border-bottom:1px solid #c8c8c8"></div>
<div class="t" style="left:226px;top:683.93px;font-size:10px;line-height:10px;font-weight:400;color:#000;"><span style="letter-spacing:-0.6px">CORS</span></div>
<div class="r" style="left:302px;top:681px;width:59px;height:15px;background:#f8f8f8;border-bottom:1px solid #c8c8c8"></div>
<div class="r" style="left:363px;top:681px;width:78px;height:15px;background:#f8f8f8;border-bottom:1px solid #c8c8c8"></div>
<div class="t" style="left:363.8px;top:683.93px;font-size:10px;line-height:10px;font-weight:400;color:#000;letter-spacing:0.2px">100</div>
<div class="r" style="left:443px;top:681px;width:84px;height:15px;background:#f8f8f8;border-bottom:1px solid #c8c8c8"></div>
<div class="t" style="left:443.8px;top:683.93px;font-size:10px;line-height:10px;font-weight:400;color:#000;letter-spacing:0.2px">32</div>
<div class="r" style="left:529px;top:681px;width:158px;height:15px;background:#f8f8f8;border-bottom:1px solid #c8c8c8"></div>
<div class="t" style="left:529.7px;top:683.93px;font-size:10px;line-height:10px;font-weight:400;color:#000;"><span style="letter-spacing:-0.6px">CORS</span>_</div>
<div class="t" style="left:590.8px;top:683.93px;font-size:10px;line-height:10px;font-weight:400;color:#000;">_100_32</div>
<div class="r" style="left:689px;top:681px;width:66px;height:15px;background:#f8f8f8;border-bottom:1px solid #c8c8c8"></div>
<div class="t" style="left:689.8px;top:683.93px;font-size:10px;line-height:10px;font-weight:400;color:#000;letter-spacing:0.2px">19</div>
<div class="r" style="left:757px;top:681px;width:131px;height:15px;background:#f8f8f8;border-bottom:1px solid #c8c8c8"></div>
<div class="t" style="left:757.7px;top:683.93px;font-size:10px;line-height:10px;font-weight:400;color:#000;"><span style="letter-spacing:-0.6px">CORS</span>_100_32</div>
<div class="r" style="left:225px;top:698px;width:75px;height:15px;background:#f8f8f8;border-bottom:1px solid #c8c8c8"></div>
<div class="t" style="left:226px;top:700.93px;font-size:10px;line-height:10px;font-weight:400;color:#000;"><span style="letter-spacing:-0.6px">CORS</span></div>
<div class="r" style="left:302px;top:698px;width:59px;height:15px;background:#f8f8f8;border-bottom:1px solid #c8c8c8"></div>
<div class="r" style="left:363px;top:698px;width:78px;height:15px;background:#f8f8f8;border-bottom:1px solid #c8c8c8"></div>
<div class="t" style="left:363.8px;top:700.93px;font-size:10px;line-height:10px;font-weight:400;color:#000;letter-spacing:0.2px">100</div>
<div class="r" style="left:443px;top:698px;width:84px;height:15px;background:#f8f8f8;border-bottom:1px solid #c8c8c8"></div>
<div class="t" style="left:443.8px;top:700.93px;font-size:10px;line-height:10px;font-weight:400;color:#000;letter-spacing:0.2px">32</div>
<div class="r" style="left:529px;top:698px;width:158px;height:15px;background:#f8f8f8;border-bottom:1px solid #c8c8c8"></div>
<div class="t" style="left:529.7px;top:700.93px;font-size:10px;line-height:10px;font-weight:400;color:#000;"><span style="letter-spacing:-0.6px">CORS</span>_</div>
<div class="t" style="left:590.8px;top:700.93px;font-size:10px;line-height:10px;font-weight:400;color:#000;">_100_32</div>
<div class="r" style="left:689px;top:698px;width:66px;height:15px;background:#f8f8f8;border-bottom:1px solid #c8c8c8"></div>
<div class="t" style="left:689.8px;top:700.93px;font-size:10px;line-height:10px;font-weight:400;color:#000;letter-spacing:0.2px">20</div>
<div class="r" style="left:757px;top:698px;width:131px;height:15px;background:#f8f8f8;border-bottom:1px solid #c8c8c8"></div>
<div class="t" style="left:757.7px;top:700.93px;font-size:10px;line-height:10px;font-weight:400;color:#000;"><span style="letter-spacing:-0.6px">CORS</span>_100_32</div>
<div class="r" style="left:302px;top:376px;width:49px;height:339px;background:#8a8683"></div>
<div class="t" style="left:325.4px;top:512px;font-family:'Liberation Serif',serif;font-size:38px;line-height:38px;color:#f0eeea;-webkit-text-stroke:0.5px #f0eeea;transform:translate(-50%,-50%) rotate(-90deg) scale(1,0.91)">ee_id</div>
<div class="r" style="left:559px;top:374px;width:33px;height:339px;background:#8a8683"></div>
<div class="r" style="left:222px;top:730px;width:676px;height:20px;background:#ece8ea;border:1px solid #603040"></div>
<div class="t" style="left:445.9px;top:735.53px;font-size:10px;line-height:10px;font-weight:400;color:#555;">1</div>
<div class="t" style="left:461.7px;top:735.53px;font-size:10px;line-height:10px;font-weight:700;color:#555;">...</div>
<div class="t" style="left:487.7px;top:735.53px;font-size:10px;line-height:10px;font-weight:700;color:#555;">1</div>
<div class="t" style="left:510.8px;top:735.53px;font-size:10px;line-height:10px;font-weight:400;color:#555;">2</div>
<div class="t" style="left:533.8px;top:735.53px;font-size:10px;line-height:10px;font-weight:400;color:#555;">3</div>
<div class="t" style="left:556.9px;top:735.53px;font-size:10px;line-height:10px;font-weight:400;color:#555;">4</div>
<div class="t" style="left:580px;top:735.53px;font-size:10px;line-height:10px;font-weight:400;color:#555;">5</div>
<div class="t" style="left:600.2px;top:735.53px;font-size:10px;line-height:10px;font-weight:700;color:#555;">...</div>
<div class="t" style="left:621px;top:735.53px;font-size:10px;line-height:10px;font-weight:400;color:#555;">62</div>
<div class="t" style="left:650.7px;top:735.53px;font-size:10px;line-height:10px;font-weight:400;color:#555;">more</div>
<div class="r" style="left:220px;top:767px;width:680px;height:1px;background:#e4eaf0"></div>
<div class="r" style="left:221px;top:769px;width:678px;height:18px;background:#e1e5e9"></div>
<div class="t" style="left:231px;top:772.56px;font-size:10.8px;line-height:10.8px;font-weight:400;color:#505050;">Dependencies</div>
<div class="r" style="left:225px;top:793px;width:385px;height:43px;background:#fff;border:1px solid #000"></div>
<div class="r" style="left:228px;top:796px;width:37px;height:16px;background:#e8e8e8;border-right:1px solid #000;border-bottom:1px solid #000"></div>
<div class="r" style="left:228px;top:814px;width:37px;height:19px;background:#f8f8f8;border-bottom:1px solid #c8c8c8"></div>
<div class="r" style="left:267px;top:796px;width:188px;height:16px;background:#e8e8e8;border-right:1px solid #000;border-bottom:1px solid #000"></div>
<div class="t" style="left:278.5px;top:799.53px;font-size:10.6px;line-height:10.6px;font-weight:700;color:#666;">Name</div>
<div class="r" style="left:267px;top:814px;width:188px;height:19px;background:#f8f8f8;border-bottom:1px solid #c8c8c8"></div>
<div class="r" style="left:457px;top:796px;width:150px;height:16px;background:#e8e8e8;border-right:1px solid #000;border-bottom:1px solid #000"></div>
<div class="t" style="left:468.5px;top:799.53px;font-size:10.6px;line-height:10.6px;font-weight:700;color:#666;">Type</div>
<div class="r" style="left:457px;top:814px;width:150px;height:19px;background:#f8f8f8;border-bottom:1px solid #c8c8c8"></div>
<div class="t" style="left:268px;top:817.03px;font-size:10px;line-height:10px;font-weight:400;color:#000;">all_bens_codes</div>
<div class="t" style="left:458px;top:817.03px;font-size:10px;line-height:10px;font-weight:400;color:#000;">Queries</div>
<svg class="r" style="left:237px;top:815px" width="18" height="16" viewBox="237 815 18 16">
<rect x="238.7" y="817.3" width="14.6" height="12" rx="1.5" fill="#fff" stroke="#808080" stroke-width="1"/>
<line x1="239.5" y1="817.3" x2="252.5" y2="817.3" stroke="#6aa0e0" stroke-width="0.6" stroke-dasharray="1 1.2"/>
<line x1="239.5" y1="829.3" x2="252.5" y2="829.3" stroke="#6aa0e0" stroke-width="0.6" stroke-dasharray="1 1.2"/>
<rect x="240.5" y="820.5" width="11" height="7" fill="#f4f4f4" stroke="#909090" stroke-width="0.8"/>
<rect x="240.5" y="820.5" width="11" height="2.2" fill="#a0a0a0"/>
<line x1="244.2" y1="822.5" x2="244.2" y2="827.5" stroke="#909090" stroke-width="0.8"/>
<line x1="247.8" y1="822.5" x2="247.8" y2="827.5" stroke="#909090" stroke-width="0.8"/>
<line x1="244" y1="828" x2="252.8" y2="816.5" stroke="#e8a848" stroke-width="1.3"/>
</svg>
<div class="r" style="left:614px;top:793px;width:281px;height:61px;background:#fff;border:1px solid #000"></div>
<div class="r" style="left:618px;top:797px;width:274px;height:15px;background:#e8e8e8;border-right:1px solid #000;border-bottom:1px solid #000"></div>
<div class="t" style="left:631.8px;top:799.44px;font-size:10.7px;line-height:10.7px;font-weight:700;color:#666;">Move all related objects to a folder</div>
<div class="r" style="left:617px;top:850px;width:275px;height:1px;background:#d0d0d0"></div>
<div class="r" style="left:625px;top:825px;width:143px;height:18px;background:#fff;border:1px solid #aaa;border-top:1.5px solid #111;border-left:1.5px solid #111"></div>
<div class="t" style="left:630px;top:828.69px;font-size:11px;line-height:11px;font-weight:400;color:#000;">Home folder</div>
<div class="r" style="left:752px;top:827px;width:15px;height:15px;background:linear-gradient(#f4f4f4,#d8d8d8);border-right:2px solid #777;border-bottom:2px solid #777"></div>
<div class="r" style="left:756px;top:831px;width:0;height:0;border-left:3.5px solid transparent;border-right:3.5px solid transparent;border-top:5px solid #000"></div>
<div class="r" style="left:774px;top:821px;width:56px;height:22px;background:linear-gradient(#f6f6f6,#e2e2e2);border:1px solid #e0e0e0"></div>
<div class="t" style="left:783.8px;top:826.15px;font-size:14px;line-height:14px;font-weight:700;color:#4a7ab0;">Move</div>
<div class="r" style="left:221px;top:860px;width:678px;height:4px;background:#e1e5e9"></div>
<div class="r" style="left:910px;top:93px;width:15px;height:773px;background:linear-gradient(90deg,#d0d0d0 0,#ececec 2px,#fafafa 6px,#f4f4f4 11px,#d8d8d8 13px,#888 14px)"></div>
<div class="r" style="left:910px;top:93px;width:14px;height:8px;background:linear-gradient(90deg,#e8e8e8,#fff 40%,#f0f0f0)"></div>
<div class="r" style="left:910px;top:826px;width:14px;height:8px;background:linear-gradient(#f4f4f4,#d8d8d8);border-radius:0 0 7px 7px"></div>
<div class="r" style="left:910px;top:834px;width:14px;height:32px;background:linear-gradient(90deg,#e8e8e8,#fcfcfc 40%,#f0f0f0)"></div>
<div class="r" style="left:911px;top:99px;width:12px;height:636px;background:linear-gradient(90deg,#1a4aa8 0,#1a4aa8 1px,#90b4d8 1px,#90b4d8 5px,#4a8ae0 5px,#5a9aea 7px,#80c0f4 8px,#80c0f4 11px,#5a7ab0 12px);border-radius:6px;box-shadow:0 0 0 0.5px #6a6a7a"></div>
<div class="r" style="left:910px;top:849px;width:14px;height:1px;background:#c8c8c8"></div>
<div class="r" style="left:914px;top:838.5px;width:0;height:0;border-left:3.5px solid transparent;border-right:3.5px solid transparent;border-bottom:5.5px solid #3a3450"></div>
<div class="r" style="left:914px;top:854.8px;width:0;height:0;border-left:3.5px solid transparent;border-right:3.5px solid transparent;border-top:5.5px solid #3a3450"></div>
<div class="r" style="left:0px;top:866px;width:926px;height:1px;background:#6a9ac8"></div>
<div class="r" style="left:0px;top:867px;width:926px;height:27px;background:linear-gradient(#b8d0e8 0,#c4d8ec 4px,#c8dcee 12px,#bcd2ea 100%)"></div>
<div class="r" style="left:0px;top:894px;width:926px;height:1px;background:repeating-linear-gradient(90deg,#777 0,#777 2px,#c8c8c8 2px,#c8c8c8 3px)"></div>
<div class="r" style="left:0px;top:895px;width:926px;height:1px;background:#e8ecf0"></div>
<div class="t" style="left:9.2px;top:877.07px;font-size:11.5px;line-height:11.5px;font-weight:700;color:#10387a;letter-spacing:0.78px;-webkit-text-stroke:0.25px #10387a">Status: Storage used <span style="color:#2060a8">18 MB of 1000 MB</span> | Traffic: <span style="color:#2060a8">0 MB of 1024 MB</span> | Younicycle Pro Developer Monthly Pack</div></body></html>
